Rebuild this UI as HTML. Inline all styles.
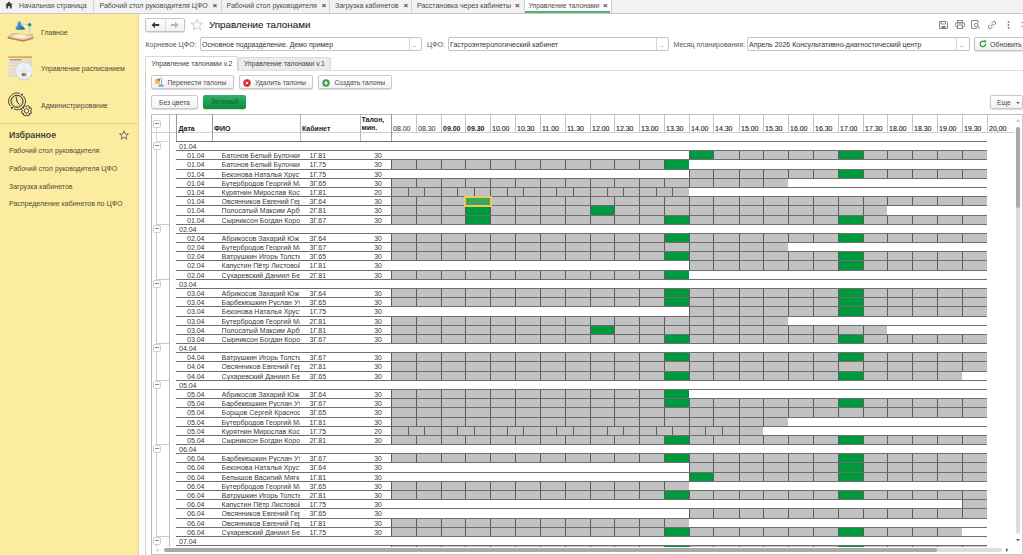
<!DOCTYPE html><html><head><meta charset="utf-8"><title>Управление талонами</title><style>
html,body{margin:0;padding:0}
body{width:1023px;height:555px;overflow:hidden;position:relative;background:#fff;font-family:"Liberation Sans", sans-serif;color:#333}
div{position:absolute;box-sizing:border-box}
.t{white-space:nowrap;font-size:7px;line-height:9px}
svg{position:absolute}

</style></head><body>
<div style="left:0px;top:0px;width:1023px;height:13px;background:#f2f2f2"></div>
<div style="left:0px;top:13px;width:1023px;height:1px;background:#c9c9c9"></div>
<svg style="left:5px;top:1px" width="8" height="8" viewBox="0 0 8 8"><path d="M4 0.6 L0.3 4.1 H1.3 V7.4 H3.1 V5.2 H4.9 V7.4 H6.7 V4.1 H7.7 Z" fill="#3c3c3c"/></svg>
<div class="t" style="left:19px;top:1px;color:#4a4a4a;font-size:7px;line-height:10px">Начальная страница</div>
<div style="left:93px;top:0px;width:1px;height:13px;background:#d2d2d2"></div>
<div class="t" style="left:99.5px;top:1px;color:#4a4a4a;font-size:7px;line-height:10px">Рабочий стол руководителя ЦФО</div>
<div class="t" style="left:212.5px;top:1px;color:#444;font-size:8px;line-height:10px;font-weight:bold">×</div>
<div style="left:221px;top:0px;width:1px;height:13px;background:#d2d2d2"></div>
<div class="t" style="left:226.5px;top:1px;color:#4a4a4a;font-size:7px;line-height:10px">Рабочий стол руководителя</div>
<div class="t" style="left:321.5px;top:1px;color:#444;font-size:8px;line-height:10px;font-weight:bold">×</div>
<div style="left:329px;top:0px;width:1px;height:13px;background:#d2d2d2"></div>
<div class="t" style="left:335px;top:1px;color:#4a4a4a;font-size:7px;line-height:10px">Загрузка кабинетов</div>
<div class="t" style="left:403.5px;top:1px;color:#444;font-size:8px;line-height:10px;font-weight:bold">×</div>
<div style="left:411px;top:0px;width:1px;height:13px;background:#d2d2d2"></div>
<div class="t" style="left:417px;top:1px;color:#4a4a4a;font-size:7px;line-height:10px">Расстановка через кабинеты</div>
<div class="t" style="left:515px;top:1px;color:#444;font-size:8px;line-height:10px;font-weight:bold">×</div>
<div style="left:524px;top:0px;width:1px;height:13px;background:#d2d2d2"></div>
<div style="left:525px;top:0px;width:86px;height:13px;background:#fff"></div>
<div style="left:525px;top:11px;width:85px;height:2px;background:#4cb478"></div>
<div class="t" style="left:528.5px;top:1px;color:#4a4a4a;font-size:6.85px;line-height:10px">Управление талонами</div>
<div class="t" style="left:603px;top:1px;color:#444;font-size:8px;line-height:10px;font-weight:bold">×</div>
<div style="left:611px;top:0px;width:1px;height:13px;background:#d2d2d2"></div>
<div style="left:0px;top:14px;width:138px;height:541px;background:#fbec9f"></div>
<div style="left:138px;top:14px;width:1px;height:541px;background:#e8d98c"></div>
<div class="t" style="left:41px;top:27.5px;color:#4d4d3a;font-size:7px;line-height:10px">Главное</div>
<div class="t" style="left:41px;top:63.8px;color:#4d4d3a;font-size:7px;line-height:10px">Управление расписанием</div>
<div class="t" style="left:41px;top:100.5px;color:#4d4d3a;font-size:7px;line-height:10px">Администрирование</div>
<div style="left:0px;top:123px;width:138px;height:1px;background:#e3d38a"></div>
<div class="t" style="left:9px;top:129.5px;color:#4a4a3a;font-size:8.8px;line-height:11px;font-weight:bold">Избранное</div>
<svg style="left:119px;top:130px" width="10" height="10" viewBox="0 0 10 10"><path d="M5 0.8 L6.2 3.8 L9.4 3.9 L6.9 5.9 L7.8 9.1 L5 7.3 L2.2 9.1 L3.1 5.9 L0.6 3.9 L3.8 3.8 Z" fill="none" stroke="#555" stroke-width="0.8"/></svg>
<div class="t" style="left:9px;top:146px;color:#4d4d3a;font-size:7px;line-height:10px">Рабочий стол руководителя</div>
<div class="t" style="left:9px;top:163.5px;color:#4d4d3a;font-size:7px;line-height:10px">Рабочий стол руководителя ЦФО</div>
<div class="t" style="left:9px;top:181.5px;color:#4d4d3a;font-size:7px;line-height:10px">Загрузка кабинетов</div>
<div class="t" style="left:9px;top:199px;color:#4d4d3a;font-size:7px;line-height:10px">Распределение кабинетов по ЦФО</div>
<svg style="left:7px;top:20px" width="28" height="24" viewBox="0 0 28 24">
<defs><radialGradient id="dk" cx="0.5" cy="0.45" r="0.55"><stop offset="0" stop-color="#ffffff"/><stop offset="0.45" stop-color="#f3e2c4"/><stop offset="1" stop-color="#d9b07e"/></radialGradient>
<linearGradient id="sh" x1="0" y1="0" x2="1" y2="1"><stop offset="0" stop-color="#7cc0ea"/><stop offset="0.6" stop-color="#2f7fc0"/><stop offset="1" stop-color="#1e5d98"/></linearGradient></defs>
<path d="M8.6 9.3 L17.8 9.3 L20 14.5 L6 14.5 Z" fill="#f7ef7c" opacity="0.6"/>
<path d="M0.5 16.8 L5.5 13.4 L25.5 14.4 L26.6 17.4 L26 19 L16 21.8 L0.8 18.6 Z" fill="#b9844f"/>
<path d="M0.5 16.8 L5.5 13.4 L25.5 14.4 L26.6 17.4 L16 20.3 Z" fill="url(#dk)"/>
<path d="M13.6 4.2 L22.5 4.5" stroke="#cfd4da" stroke-width="1.2"/>
<rect x="22" y="5.2" width="1.3" height="9.6" fill="#c9ced4"/>
<circle cx="22.6" cy="4.7" r="1.8" fill="#2f7fc0"/>
<path d="M10.6 1.8 Q12.2 0.6 13.8 1.8 L14.4 5.2 Q17.6 7.2 18.2 9.2 Q13.2 10.5 8.3 9.2 Q9 7 10.4 5.2 Z" fill="url(#sh)"/>
</svg>
<svg style="left:8px;top:56px" width="26" height="26" viewBox="0 0 26 26">
<defs><linearGradient id="cal" x1="0" y1="0" x2="1" y2="1"><stop offset="0" stop-color="#f1e9d6"/><stop offset="1" stop-color="#ddd0b0"/></linearGradient></defs>
<rect x="0" y="0.5" width="24" height="20.5" fill="url(#cal)"/>
<rect x="0" y="0.4" width="24" height="1.3" fill="#d9953e"/>
<rect x="1.5" y="3" width="12" height="1.6" fill="#9a8f7a" opacity="0.8"/>
<rect x="1.5" y="6.5" width="8" height="0.5" fill="#cdbf9f"/>
<rect x="1.5" y="9" width="8" height="0.5" fill="#cdbf9f"/>
<ellipse cx="16" cy="23" rx="5" ry="1.5" fill="#c9c3b0" opacity="0.6"/>
<circle cx="16" cy="14.8" r="8.7" fill="#d3dde6"/>
<circle cx="16" cy="14.8" r="7.9" fill="#eef4f9"/>
<path d="M16 7.5 V22 M8.6 14.8 H23.4" stroke="#c3d0dc" stroke-width="0.5"/>
<rect x="13.7" y="17" width="2.2" height="3.2" fill="#2e8ad6"/>
<rect x="15.9" y="17" width="2.4" height="3.2" fill="#ea7a2c"/>
</svg>
<svg style="left:7px;top:92px" width="28" height="26" viewBox="0 0 28 26">
<path d="M16.36 3.96 A8.3 8.3 0 0 1 6.89 17.00 M3.46 14.41 A8.3 8.3 0 0 1 13.11 1.60" fill="none" stroke="#333" stroke-width="0.9"/>
<path d="M15.97 3.53 L15.25 0.90 L13.55 3.62 Z M4.03 15.07 L4.75 17.70 L6.45 14.98 Z" fill="#222"/>
<circle cx="10" cy="9.3" r="6.1" fill="none" stroke="#333" stroke-width="1"/>
<path d="M14.30 9.30 L15.30 9.30 M13.72 11.45 L14.59 11.95 M12.15 13.02 L12.65 13.89 M10.00 13.60 L10.00 14.60 M7.85 13.02 L7.35 13.89 M6.28 11.45 L5.41 11.95 M5.70 9.30 L4.70 9.30 M6.28 7.15 L5.41 6.65 M7.85 5.58 L7.35 4.71 M10.00 5.00 L10.00 4.00 M12.15 5.58 L12.65 4.71 M13.72 7.15 L14.59 6.65 " stroke="#444" stroke-width="0.6"/>
<path d="M9 4.8 L10.2 10 L12.4 12.6" fill="none" stroke="#333" stroke-width="1"/>
<path d="M23.30 18.70 L24.70 19.81 L23.90 21.76 L22.11 21.56 L22.26 21.41 L22.46 23.20 L20.51 24.00 L19.40 22.60 L19.60 22.60 L18.49 24.00 L16.54 23.20 L16.74 21.41 L16.89 21.56 L15.10 21.76 L14.30 19.81 L15.70 18.70 L15.70 18.90 L14.30 17.79 L15.10 15.84 L16.89 16.04 L16.74 16.19 L16.54 14.40 L18.49 13.60 L19.60 15.00 L19.40 15.00 L20.51 13.60 L22.46 14.40 L22.26 16.19 L22.11 16.04 L23.90 15.84 L24.70 17.79 L23.30 18.90 Z" fill="#fbec9f" stroke="#333" stroke-width="0.9"/>
<circle cx="19.5" cy="18.8" r="2.2" fill="none" stroke="#333" stroke-width="0.8"/>
</svg>
<div style="left:145px;top:18px;width:40px;height:14px;border:1px solid #c4c4c4;border-radius:2px;background:linear-gradient(#fff,#f1f1f1);box-shadow:0 1px 1px rgba(0,0,0,0.12)"></div>
<div style="left:165px;top:19px;width:1px;height:12px;background:#dcdcdc"></div>
<svg style="left:151px;top:21px" width="9" height="8" viewBox="0 0 9 8"><path d="M0.5 4 L4 0.8 V2.9 H8.2 V5.1 H4 V7.2 Z" fill="#3a3a3a"/></svg>
<svg style="left:170px;top:21px" width="9" height="8" viewBox="0 0 9 8"><path d="M8.5 4 L5 0.8 V2.9 H0.8 V5.1 H5 V7.2 Z" fill="#b5b5b5"/></svg>
<svg style="left:190px;top:18px" width="14" height="13" viewBox="0 0 14 13"><path d="M7 1 L8.6 5 L12.9 5.1 L9.5 7.8 L10.7 12 L7 9.6 L3.3 12 L4.5 7.8 L1.1 5.1 L5.4 5 Z" fill="none" stroke="#c8c8c8" stroke-width="0.9"/></svg>
<div class="t" style="left:209px;top:18px;color:#1e1e1e;font-size:9.8px;line-height:13px;-webkit-text-stroke:0.1px #1e1e1e">Управление талонами</div>
<svg style="left:939px;top:21px" width="9" height="8" viewBox="0 0 9 8"><path d="M0.5 0.5 H7.5 L8.5 1.5 V7.5 H0.5 Z" fill="none" stroke="#7c7c7c" stroke-width="0.9"/><rect x="2" y="0.5" width="4.5" height="2.5" fill="none" stroke="#7c7c7c" stroke-width="0.8"/><rect x="2.5" y="5" width="4" height="2.5" fill="#7c7c7c"/></svg>
<svg style="left:955px;top:20px" width="10" height="9" viewBox="0 0 10 9"><rect x="2.5" y="0.5" width="5" height="2.5" fill="none" stroke="#7c7c7c" stroke-width="0.9"/><rect x="0.5" y="2.8" width="9" height="4" rx="1" fill="none" stroke="#7c7c7c" stroke-width="0.9"/><rect x="2.5" y="5" width="5" height="3.5" fill="#fff" stroke="#7c7c7c" stroke-width="0.9"/></svg>
<svg style="left:971px;top:20px" width="10" height="9" viewBox="0 0 10 9"><path d="M7 0.5 H0.5 V8.5 H6" fill="none" stroke="#7c7c7c" stroke-width="0.9"/><path d="M7 0.5 V3" fill="none" stroke="#7c7c7c" stroke-width="0.9"/><circle cx="5.2" cy="5" r="1.8" fill="none" stroke="#7c7c7c" stroke-width="0.9"/><path d="M6.5 6.3 L8.5 8.3" stroke="#7c7c7c" stroke-width="1.1"/></svg>
<svg style="left:987px;top:20px" width="10" height="10" viewBox="0 0 10 10"><g transform="rotate(-45 5 5)"><path d="M4.2 3.3 H2.2 A1.7 1.7 0 0 0 2.2 6.7 H4.2" fill="none" stroke="#7c7c7c" stroke-width="0.9"/><path d="M5.8 3.3 H7.8 A1.7 1.7 0 0 1 7.8 6.7 H5.8" fill="none" stroke="#7c7c7c" stroke-width="0.9"/><path d="M3.4 5 H6.6" stroke="#7c7c7c" stroke-width="0.9"/></g></svg>
<svg style="left:1007px;top:21px" width="3" height="8" viewBox="0 0 3 8"><circle cx="1.5" cy="1" r="0.9" fill="#7c7c7c"/><circle cx="1.5" cy="4" r="0.9" fill="#7c7c7c"/><circle cx="1.5" cy="7" r="0.9" fill="#7c7c7c"/></svg>
<div style="left:1021px;top:22px;width:2px;height:1px;background:#aaa"></div>
<div style="left:1021px;top:26px;width:2px;height:1px;background:#aaa"></div>
<div class="t" style="left:145.5px;top:39.6px;color:#555;font-size:7px;line-height:10px">Корневое ЦФО:</div>
<div style="left:200px;top:37px;width:222px;height:14px;border:1px solid #c4c4c4;border-radius:2px;background:#fff"></div>
<div style="left:409px;top:38px;width:1px;height:12px;background:#d6d6d6"></div>
<div class="t" style="left:202px;top:39.7px;color:#333;font-size:7px;line-height:10px;overflow:hidden;width:206px">Основное подразделение. Демо пример</div>
<div class="t" style="left:412.5px;top:39.5px;color:#666;font-size:7px;line-height:10px">..</div>
<div class="t" style="left:427px;top:39.6px;color:#555;font-size:7px;line-height:10px">ЦФО:</div>
<div style="left:448px;top:37px;width:221px;height:14px;border:1px solid #c4c4c4;border-radius:2px;background:#fff"></div>
<div style="left:656px;top:38px;width:1px;height:12px;background:#d6d6d6"></div>
<div class="t" style="left:450px;top:39.7px;color:#333;font-size:7px;line-height:10px;overflow:hidden;width:205px">Гастроэнтерологический кабинет</div>
<div class="t" style="left:659.5px;top:39.5px;color:#666;font-size:7px;line-height:10px">..</div>
<div class="t" style="left:673.5px;top:39.6px;color:#555;font-size:7px;line-height:10px">Месяц планирования:</div>
<div style="left:747px;top:37px;width:223px;height:14px;border:1px solid #c4c4c4;border-radius:2px;background:#fff"></div>
<div style="left:956px;top:38px;width:1px;height:12px;background:#d6d6d6"></div>
<div class="t" style="left:749px;top:39.7px;color:#333;font-size:7px;line-height:10px;overflow:hidden;width:206px">Апрель 2026 Консультативно-диагностический центр</div>
<div class="t" style="left:959.5px;top:39.5px;color:#666;font-size:7px;line-height:10px">..</div>
<div style="left:974px;top:37px;width:60px;height:14px;border:1px solid #c4c4c4;border-radius:2px;background:linear-gradient(#fff,#f0f0f0);box-shadow:0 1px 1px rgba(0,0,0,0.12)"></div>
<svg style="left:978.5px;top:40px" width="8" height="8" viewBox="0 0 8 8"><path d="M6.6 4 A2.7 2.7 0 1 1 5.3 1.7" fill="none" stroke="#2d9c3c" stroke-width="1.3"/><path d="M4.2 0.2 L7.2 0.6 L6.6 3.4 Z" fill="#2d9c3c"/></svg>
<div class="t" style="left:990px;top:39.6px;color:#444;font-size:7px;line-height:10px">Обновить</div>
<div style="left:145px;top:70px;width:878px;height:1px;background:#dedede"></div>
<div style="left:145px;top:56px;width:93px;height:15px;border:1px solid #d6d6d6;border-bottom:none;border-radius:2px 2px 0 0;background:#fff"></div>
<div style="left:238px;top:57px;width:93px;height:13px;border:1px solid #d9d9d9;border-bottom:none;border-radius:2px 2px 0 0;background:#ececec"></div>
<div class="t" style="left:151.5px;top:59px;color:#444;font-size:6.8px;line-height:10px">Управление талонами v.2</div>
<div class="t" style="left:244px;top:59px;color:#444;font-size:6.8px;line-height:10px">Управление талонами v.1</div>
<div style="left:145px;top:71px;width:1px;height:484px;background:#d2d2d2"></div>
<div style="left:151px;top:75px;width:83px;height:14px;border:1px solid #c8c8c8;border-radius:2px;background:linear-gradient(#fff,#f2f2f2);box-shadow:0 1px 1px rgba(0,0,0,0.15)"></div>
<div class="t" style="left:167.5px;top:77.8px;color:#4d4d4d;font-size:6.75px;line-height:10px">Перенести талоны</div>
<svg style="left:154px;top:77px" width="12" height="11" viewBox="0 0 12 11"><rect x="1" y="1.6" width="5" height="5.1" fill="#eeb545"/><rect x="1.6" y="4.5" width="3.6" height="1.2" fill="#f7d27a"/><circle cx="1.9" cy="2.6" r="0.8" fill="#f8e08a"/><path d="M4.6 2.8 L6.6 1 L7.6 1.6 V7.8" fill="none" stroke="#7aa6cf" stroke-width="1"/><ellipse cx="7" cy="8.7" rx="3" ry="1.1" fill="#6aa2d6"/><circle cx="4.6" cy="2.8" r="0.9" fill="#1f5a94"/></svg>
<div style="left:239px;top:75px;width:74px;height:14px;border:1px solid #c8c8c8;border-radius:2px;background:linear-gradient(#fff,#f2f2f2);box-shadow:0 1px 1px rgba(0,0,0,0.15)"></div>
<div class="t" style="left:255px;top:77.8px;color:#4d4d4d;font-size:6.75px;line-height:10px">Удалить талоны</div>
<svg style="left:243px;top:79px" width="8" height="8" viewBox="0 0 8 8"><circle cx="4" cy="4" r="3.7" fill="#d9262a"/><path d="M2.6 2.6 L5.4 5.4 M5.4 2.6 L2.6 5.4" stroke="#fff" stroke-width="1"/></svg>
<div style="left:318px;top:75px;width:74px;height:14px;border:1px solid #c8c8c8;border-radius:2px;background:linear-gradient(#fff,#f2f2f2);box-shadow:0 1px 1px rgba(0,0,0,0.15)"></div>
<div class="t" style="left:334.5px;top:77.8px;color:#4d4d4d;font-size:6.75px;line-height:10px">Создать талоны</div>
<svg style="left:322px;top:79px" width="8" height="8" viewBox="0 0 8 8"><circle cx="4" cy="4" r="3.7" fill="#3aa04a"/><path d="M4 2 V6 M2 4 H6" stroke="#fff" stroke-width="1.2"/></svg>
<div style="left:151px;top:95px;width:47px;height:14px;border:1px solid #c8c8c8;border-radius:2px;background:linear-gradient(#fff,#f2f2f2);box-shadow:0 1px 1px rgba(0,0,0,0.15)"></div>
<div class="t" style="left:159px;top:97.8px;color:#4d4d4d;font-size:6.75px;line-height:10px">Без цвета</div>
<div style="left:203px;top:95px;width:43px;height:14px;border-radius:2px;background:linear-gradient(#34ad6a,#07903c);box-shadow:0 1px 1px rgba(0,0,0,0.15)"></div>
<div class="t" style="left:211px;top:97.4px;color:#0f5f2c;font-size:6.7px;line-height:10px">Зеленый</div>
<div style="left:989.5px;top:95px;width:33.5px;height:13.5px;border:1px solid #c8c8c8;border-radius:2px;background:linear-gradient(#fff,#f2f2f2);box-shadow:0 1px 1px rgba(0,0,0,0.15)"></div>
<div class="t" style="left:997px;top:97.55px;color:#4d4d4d;font-size:6.75px;line-height:10px">Еще</div>
<svg style="left:1015.5px;top:101.5px" width="4" height="3" viewBox="0 0 4 3"><path d="M0.3 0 H3.7 L2 2 Z" fill="#555"/></svg>
<div style="left:151px;top:114px;width:872px;height:441px;border:1px solid #bdbdbd"></div>
<div style="left:169px;top:114px;width:1px;height:440px;background:#c2c2c2"></div>
<div style="left:151px;top:132px;width:863px;height:1px;background:#d0d0d0"></div>
<div style="left:176px;top:114px;width:1px;height:27px;background:#9a9a9a"></div>
<div style="left:212px;top:114px;width:1px;height:27px;background:#9a9a9a"></div>
<div style="left:300px;top:114px;width:1px;height:27px;background:#b8b8b8"></div>
<div style="left:360px;top:114px;width:1px;height:27px;background:#b8b8b8"></div>
<div style="left:391px;top:114px;width:1px;height:27px;background:#9a9a9a"></div>
<div style="left:416px;top:114px;width:1px;height:18px;background:#c4c4c4"></div>
<div style="left:441px;top:114px;width:1px;height:18px;background:#c4c4c4"></div>
<div style="left:465px;top:114px;width:1px;height:18px;background:#c4c4c4"></div>
<div style="left:490px;top:114px;width:1px;height:18px;background:#c4c4c4"></div>
<div style="left:515px;top:114px;width:1px;height:18px;background:#c4c4c4"></div>
<div style="left:540px;top:114px;width:1px;height:18px;background:#c4c4c4"></div>
<div style="left:565px;top:114px;width:1px;height:18px;background:#c4c4c4"></div>
<div style="left:590px;top:114px;width:1px;height:18px;background:#c4c4c4"></div>
<div style="left:614px;top:114px;width:1px;height:18px;background:#c4c4c4"></div>
<div style="left:639px;top:114px;width:1px;height:18px;background:#c4c4c4"></div>
<div style="left:664px;top:114px;width:1px;height:18px;background:#c4c4c4"></div>
<div style="left:689px;top:114px;width:1px;height:18px;background:#c4c4c4"></div>
<div style="left:713px;top:114px;width:1px;height:18px;background:#c4c4c4"></div>
<div style="left:739px;top:114px;width:1px;height:18px;background:#c4c4c4"></div>
<div style="left:763px;top:114px;width:1px;height:18px;background:#c4c4c4"></div>
<div style="left:788px;top:114px;width:1px;height:18px;background:#c4c4c4"></div>
<div style="left:813px;top:114px;width:1px;height:18px;background:#c4c4c4"></div>
<div style="left:838px;top:114px;width:1px;height:18px;background:#c4c4c4"></div>
<div style="left:863px;top:114px;width:1px;height:18px;background:#c4c4c4"></div>
<div style="left:887px;top:114px;width:1px;height:18px;background:#c4c4c4"></div>
<div style="left:912px;top:114px;width:1px;height:18px;background:#c4c4c4"></div>
<div style="left:937px;top:114px;width:1px;height:18px;background:#c4c4c4"></div>
<div style="left:962px;top:114px;width:1px;height:18px;background:#c4c4c4"></div>
<div style="left:987px;top:114px;width:1px;height:18px;background:#c4c4c4"></div>
<div style="left:176px;top:141px;width:811px;height:1px;background:#707070"></div>
<div class="t" style="left:178.5px;top:124px;color:#222;font-size:7px;line-height:9px;font-weight:bold">Дата</div>
<div class="t" style="left:214px;top:124px;color:#222;font-size:7px;line-height:9px;font-weight:bold">ФИО</div>
<div class="t" style="left:302px;top:124px;color:#222;font-size:7px;line-height:9px;font-weight:bold">Кабинет</div>
<div class="t" style="left:361.5px;top:115px;color:#222;font-size:7px;line-height:9px;font-weight:bold">Талон,</div>
<div class="t" style="left:361.5px;top:123px;color:#222;font-size:7px;line-height:9px;font-weight:bold">мин.</div>
<div class="t" style="left:393px;top:123.6px;color:#3f4b58;font-size:7px;line-height:9px;-webkit-text-stroke:0.1px #3f4b58">08.00</div>
<div class="t" style="left:418px;top:123.6px;color:#3f4b58;font-size:7px;line-height:9px;-webkit-text-stroke:0.1px #3f4b58">08.30</div>
<div class="t" style="left:443px;top:123.6px;color:#222;font-size:7px;line-height:9px;font-weight:bold">09.00</div>
<div class="t" style="left:467px;top:123.6px;color:#222;font-size:7px;line-height:9px;font-weight:bold">09.30</div>
<div class="t" style="left:492px;top:123.6px;color:#1a1a1a;font-size:7px;line-height:9px;-webkit-text-stroke:0.1px #1a1a1a">10.00</div>
<div class="t" style="left:517px;top:123.6px;color:#1a1a1a;font-size:7px;line-height:9px;-webkit-text-stroke:0.1px #1a1a1a">10.30</div>
<div class="t" style="left:542px;top:123.6px;color:#1a1a1a;font-size:7px;line-height:9px;-webkit-text-stroke:0.1px #1a1a1a">11.00</div>
<div class="t" style="left:567px;top:123.6px;color:#1a1a1a;font-size:7px;line-height:9px;-webkit-text-stroke:0.1px #1a1a1a">11.30</div>
<div class="t" style="left:592px;top:123.6px;color:#1a1a1a;font-size:7px;line-height:9px;-webkit-text-stroke:0.1px #1a1a1a">12.00</div>
<div class="t" style="left:616px;top:123.6px;color:#1a1a1a;font-size:7px;line-height:9px;-webkit-text-stroke:0.1px #1a1a1a">12.30</div>
<div class="t" style="left:641px;top:123.6px;color:#1a1a1a;font-size:7px;line-height:9px;-webkit-text-stroke:0.1px #1a1a1a">13.00</div>
<div class="t" style="left:666px;top:123.6px;color:#1a1a1a;font-size:7px;line-height:9px;-webkit-text-stroke:0.1px #1a1a1a">13.30</div>
<div class="t" style="left:691px;top:123.6px;color:#1a1a1a;font-size:7px;line-height:9px;-webkit-text-stroke:0.1px #1a1a1a">14.00</div>
<div class="t" style="left:715px;top:123.6px;color:#1a1a1a;font-size:7px;line-height:9px;-webkit-text-stroke:0.1px #1a1a1a">14.30</div>
<div class="t" style="left:741px;top:123.6px;color:#1a1a1a;font-size:7px;line-height:9px;-webkit-text-stroke:0.1px #1a1a1a">15.00</div>
<div class="t" style="left:765px;top:123.6px;color:#1a1a1a;font-size:7px;line-height:9px;-webkit-text-stroke:0.1px #1a1a1a">15.30</div>
<div class="t" style="left:790px;top:123.6px;color:#1a1a1a;font-size:7px;line-height:9px;-webkit-text-stroke:0.1px #1a1a1a">16.00</div>
<div class="t" style="left:815px;top:123.6px;color:#1a1a1a;font-size:7px;line-height:9px;-webkit-text-stroke:0.1px #1a1a1a">16.30</div>
<div class="t" style="left:840px;top:123.6px;color:#1a1a1a;font-size:7px;line-height:9px;-webkit-text-stroke:0.1px #1a1a1a">17.00</div>
<div class="t" style="left:865px;top:123.6px;color:#1a1a1a;font-size:7px;line-height:9px;-webkit-text-stroke:0.1px #1a1a1a">17.30</div>
<div class="t" style="left:889px;top:123.6px;color:#1a1a1a;font-size:7px;line-height:9px;-webkit-text-stroke:0.1px #1a1a1a">18.00</div>
<div class="t" style="left:914px;top:123.6px;color:#1a1a1a;font-size:7px;line-height:9px;-webkit-text-stroke:0.1px #1a1a1a">18.30</div>
<div class="t" style="left:939px;top:123.6px;color:#1a1a1a;font-size:7px;line-height:9px;-webkit-text-stroke:0.1px #1a1a1a">19.00</div>
<div class="t" style="left:964px;top:123.6px;color:#1a1a1a;font-size:7px;line-height:9px;-webkit-text-stroke:0.1px #1a1a1a">19.30</div>
<div class="t" style="left:989px;top:123.6px;color:#1a1a1a;font-size:7px;line-height:9px;-webkit-text-stroke:0.1px #1a1a1a">20,00</div>
<div style="left:153px;top:120px;width:8px;height:8px;border:1px solid #cfcfcf;border-radius:2px;background:#fff"></div>
<div style="left:155px;top:123px;width:4px;height:1px;background:#8a8a8a"></div>
<div style="left:156px;top:128px;width:1px;height:13px;background:#dadada"></div>
<div style="left:156px;top:141px;width:13px;height:1px;background:#dadada"></div>
<div class="t" style="left:179px;top:141.5px;color:#3a3a3a;font-size:7px;line-height:9px">01.04</div>
<div style="left:153px;top:142px;width:8px;height:8px;border:1px solid #cfcfcf;border-radius:2px;background:#fff"></div>
<div style="left:155px;top:145px;width:4px;height:1px;background:#8a8a8a"></div>
<div class="t" style="left:187px;top:150.5px;color:#3a3a3a;font-size:7px;line-height:9px">01.04</div>
<div class="t" style="left:221.6px;top:150.5px;width:78.8px;overflow:hidden;color:#3a3a3a;line-height:9px">Батонов Белый Булочки</div>
<div class="t" style="left:309.5px;top:150.5px;color:#3a3a3a;font-size:7px;line-height:9px">1Г.81</div>
<div class="t" style="left:340px;top:150.5px;width:42px;text-align:right;color:#3a3a3a;line-height:9px">30</div>
<div class="t" style="left:187px;top:159.5px;color:#3a3a3a;font-size:7px;line-height:9px">01.04</div>
<div class="t" style="left:221.6px;top:159.5px;width:78.8px;overflow:hidden;color:#3a3a3a;line-height:9px">Батонов Белый Булочки</div>
<div class="t" style="left:309.5px;top:159.5px;color:#3a3a3a;font-size:7px;line-height:9px">1Г.75</div>
<div class="t" style="left:340px;top:159.5px;width:42px;text-align:right;color:#3a3a3a;line-height:9px">30</div>
<div class="t" style="left:187px;top:169.5px;color:#3a3a3a;font-size:7px;line-height:9px">01.04</div>
<div class="t" style="left:221.6px;top:169.5px;width:78.8px;overflow:hidden;color:#3a3a3a;line-height:9px">Беконова Наталья Хруст</div>
<div class="t" style="left:309.5px;top:169.5px;color:#3a3a3a;font-size:7px;line-height:9px">1Г.75</div>
<div class="t" style="left:340px;top:169.5px;width:42px;text-align:right;color:#3a3a3a;line-height:9px">30</div>
<div class="t" style="left:187px;top:178.5px;color:#3a3a3a;font-size:7px;line-height:9px">01.04</div>
<div class="t" style="left:221.6px;top:178.5px;width:78.8px;overflow:hidden;color:#3a3a3a;line-height:9px">Бутербродов Георгий Ма</div>
<div class="t" style="left:309.5px;top:178.5px;color:#3a3a3a;font-size:7px;line-height:9px">3Г.65</div>
<div class="t" style="left:340px;top:178.5px;width:42px;text-align:right;color:#3a3a3a;line-height:9px">30</div>
<div class="t" style="left:187px;top:187.5px;color:#3a3a3a;font-size:7px;line-height:9px">01.04</div>
<div class="t" style="left:221.6px;top:187.5px;width:78.8px;overflow:hidden;color:#3a3a3a;line-height:9px">Курятнин Мирослав Кост</div>
<div class="t" style="left:309.5px;top:187.5px;color:#3a3a3a;font-size:7px;line-height:9px">1Г.81</div>
<div class="t" style="left:340px;top:187.5px;width:42px;text-align:right;color:#3a3a3a;line-height:9px">20</div>
<div class="t" style="left:187px;top:196.5px;color:#3a3a3a;font-size:7px;line-height:9px">01.04</div>
<div class="t" style="left:221.6px;top:196.5px;width:78.8px;overflow:hidden;color:#3a3a3a;line-height:9px">Овсянников Евгений Гер</div>
<div class="t" style="left:309.5px;top:196.5px;color:#3a3a3a;font-size:7px;line-height:9px">3Г.64</div>
<div class="t" style="left:340px;top:196.5px;width:42px;text-align:right;color:#3a3a3a;line-height:9px">30</div>
<div class="t" style="left:187px;top:205.5px;color:#3a3a3a;font-size:7px;line-height:9px">01.04</div>
<div class="t" style="left:221.6px;top:205.5px;width:78.8px;overflow:hidden;color:#3a3a3a;line-height:9px">Полосатый Максим Арбу</div>
<div class="t" style="left:309.5px;top:205.5px;color:#3a3a3a;font-size:7px;line-height:9px">2Г.81</div>
<div class="t" style="left:340px;top:205.5px;width:42px;text-align:right;color:#3a3a3a;line-height:9px">30</div>
<div class="t" style="left:187px;top:215.5px;color:#3a3a3a;font-size:7px;line-height:9px">01.04</div>
<div class="t" style="left:221.6px;top:215.5px;width:78.8px;overflow:hidden;color:#3a3a3a;line-height:9px">Сырниксон Богдан Коро</div>
<div class="t" style="left:309.5px;top:215.5px;color:#3a3a3a;font-size:7px;line-height:9px">3Г.67</div>
<div class="t" style="left:340px;top:215.5px;width:42px;text-align:right;color:#3a3a3a;line-height:9px">30</div>
<div class="t" style="left:179px;top:224.5px;color:#3a3a3a;font-size:7px;line-height:9px">02.04</div>
<div style="left:153px;top:225px;width:8px;height:8px;border:1px solid #cfcfcf;border-radius:2px;background:#fff"></div>
<div style="left:155px;top:228px;width:4px;height:1px;background:#8a8a8a"></div>
<div class="t" style="left:187px;top:233.5px;color:#3a3a3a;font-size:7px;line-height:9px">02.04</div>
<div class="t" style="left:221.6px;top:233.5px;width:78.8px;overflow:hidden;color:#3a3a3a;line-height:9px">Абрикосов Захарий Юж</div>
<div class="t" style="left:309.5px;top:233.5px;color:#3a3a3a;font-size:7px;line-height:9px">3Г.64</div>
<div class="t" style="left:340px;top:233.5px;width:42px;text-align:right;color:#3a3a3a;line-height:9px">30</div>
<div class="t" style="left:187px;top:242.5px;color:#3a3a3a;font-size:7px;line-height:9px">02.04</div>
<div class="t" style="left:221.6px;top:242.5px;width:78.8px;overflow:hidden;color:#3a3a3a;line-height:9px">Бутербродов Георгий Ма</div>
<div class="t" style="left:309.5px;top:242.5px;color:#3a3a3a;font-size:7px;line-height:9px">3Г.67</div>
<div class="t" style="left:340px;top:242.5px;width:42px;text-align:right;color:#3a3a3a;line-height:9px">30</div>
<div class="t" style="left:187px;top:251.5px;color:#3a3a3a;font-size:7px;line-height:9px">02.04</div>
<div class="t" style="left:221.6px;top:251.5px;width:78.8px;overflow:hidden;color:#3a3a3a;line-height:9px">Ватрушкин Игорь Толсть</div>
<div class="t" style="left:309.5px;top:251.5px;color:#3a3a3a;font-size:7px;line-height:9px">3Г.65</div>
<div class="t" style="left:340px;top:251.5px;width:42px;text-align:right;color:#3a3a3a;line-height:9px">30</div>
<div class="t" style="left:187px;top:260.5px;color:#3a3a3a;font-size:7px;line-height:9px">02.04</div>
<div class="t" style="left:221.6px;top:260.5px;width:78.8px;overflow:hidden;color:#3a3a3a;line-height:9px">Капустин Пётр Листовой</div>
<div class="t" style="left:309.5px;top:260.5px;color:#3a3a3a;font-size:7px;line-height:9px">1Г.81</div>
<div class="t" style="left:340px;top:260.5px;width:42px;text-align:right;color:#3a3a3a;line-height:9px">30</div>
<div class="t" style="left:187px;top:270.5px;color:#3a3a3a;font-size:7px;line-height:9px">02.04</div>
<div class="t" style="left:221.6px;top:270.5px;width:78.8px;overflow:hidden;color:#3a3a3a;line-height:9px">Сухаревский Даниил Бе</div>
<div class="t" style="left:309.5px;top:270.5px;color:#3a3a3a;font-size:7px;line-height:9px">2Г.81</div>
<div class="t" style="left:340px;top:270.5px;width:42px;text-align:right;color:#3a3a3a;line-height:9px">30</div>
<div class="t" style="left:179px;top:279.5px;color:#3a3a3a;font-size:7px;line-height:9px">03.04</div>
<div style="left:153px;top:280px;width:8px;height:8px;border:1px solid #cfcfcf;border-radius:2px;background:#fff"></div>
<div style="left:155px;top:283px;width:4px;height:1px;background:#8a8a8a"></div>
<div class="t" style="left:187px;top:288.5px;color:#3a3a3a;font-size:7px;line-height:9px">03.04</div>
<div class="t" style="left:221.6px;top:288.5px;width:78.8px;overflow:hidden;color:#3a3a3a;line-height:9px">Абрикосов Захарий Юж</div>
<div class="t" style="left:309.5px;top:288.5px;color:#3a3a3a;font-size:7px;line-height:9px">3Г.64</div>
<div class="t" style="left:340px;top:288.5px;width:42px;text-align:right;color:#3a3a3a;line-height:9px">30</div>
<div class="t" style="left:187px;top:297.5px;color:#3a3a3a;font-size:7px;line-height:9px">03.04</div>
<div class="t" style="left:221.6px;top:297.5px;width:78.8px;overflow:hidden;color:#3a3a3a;line-height:9px">Барбекюшкин Руслан Ут</div>
<div class="t" style="left:309.5px;top:297.5px;color:#3a3a3a;font-size:7px;line-height:9px">3Г.65</div>
<div class="t" style="left:340px;top:297.5px;width:42px;text-align:right;color:#3a3a3a;line-height:9px">30</div>
<div class="t" style="left:187px;top:306.5px;color:#3a3a3a;font-size:7px;line-height:9px">03.04</div>
<div class="t" style="left:221.6px;top:306.5px;width:78.8px;overflow:hidden;color:#3a3a3a;line-height:9px">Беконова Наталья Хруст</div>
<div class="t" style="left:309.5px;top:306.5px;color:#3a3a3a;font-size:7px;line-height:9px">1Г.75</div>
<div class="t" style="left:340px;top:306.5px;width:42px;text-align:right;color:#3a3a3a;line-height:9px">30</div>
<div class="t" style="left:187px;top:316.5px;color:#3a3a3a;font-size:7px;line-height:9px">03.04</div>
<div class="t" style="left:221.6px;top:316.5px;width:78.8px;overflow:hidden;color:#3a3a3a;line-height:9px">Бутербродов Георгий Ма</div>
<div class="t" style="left:309.5px;top:316.5px;color:#3a3a3a;font-size:7px;line-height:9px">2Г.81</div>
<div class="t" style="left:340px;top:316.5px;width:42px;text-align:right;color:#3a3a3a;line-height:9px">30</div>
<div class="t" style="left:187px;top:325.5px;color:#3a3a3a;font-size:7px;line-height:9px">03.04</div>
<div class="t" style="left:221.6px;top:325.5px;width:78.8px;overflow:hidden;color:#3a3a3a;line-height:9px">Полосатый Максим Арбу</div>
<div class="t" style="left:309.5px;top:325.5px;color:#3a3a3a;font-size:7px;line-height:9px">1Г.81</div>
<div class="t" style="left:340px;top:325.5px;width:42px;text-align:right;color:#3a3a3a;line-height:9px">30</div>
<div class="t" style="left:187px;top:334.5px;color:#3a3a3a;font-size:7px;line-height:9px">03.04</div>
<div class="t" style="left:221.6px;top:334.5px;width:78.8px;overflow:hidden;color:#3a3a3a;line-height:9px">Сырниксон Богдан Коро</div>
<div class="t" style="left:309.5px;top:334.5px;color:#3a3a3a;font-size:7px;line-height:9px">3Г.67</div>
<div class="t" style="left:340px;top:334.5px;width:42px;text-align:right;color:#3a3a3a;line-height:9px">30</div>
<div class="t" style="left:179px;top:343.5px;color:#3a3a3a;font-size:7px;line-height:9px">04.04</div>
<div style="left:153px;top:344px;width:8px;height:8px;border:1px solid #cfcfcf;border-radius:2px;background:#fff"></div>
<div style="left:155px;top:347px;width:4px;height:1px;background:#8a8a8a"></div>
<div class="t" style="left:187px;top:352.5px;color:#3a3a3a;font-size:7px;line-height:9px">04.04</div>
<div class="t" style="left:221.6px;top:352.5px;width:78.8px;overflow:hidden;color:#3a3a3a;line-height:9px">Ватрушкин Игорь Толсть</div>
<div class="t" style="left:309.5px;top:352.5px;color:#3a3a3a;font-size:7px;line-height:9px">3Г.67</div>
<div class="t" style="left:340px;top:352.5px;width:42px;text-align:right;color:#3a3a3a;line-height:9px">30</div>
<div class="t" style="left:187px;top:361.5px;color:#3a3a3a;font-size:7px;line-height:9px">04.04</div>
<div class="t" style="left:221.6px;top:361.5px;width:78.8px;overflow:hidden;color:#3a3a3a;line-height:9px">Овсянников Евгений Гер</div>
<div class="t" style="left:309.5px;top:361.5px;color:#3a3a3a;font-size:7px;line-height:9px">2Г.81</div>
<div class="t" style="left:340px;top:361.5px;width:42px;text-align:right;color:#3a3a3a;line-height:9px">30</div>
<div class="t" style="left:187px;top:371.5px;color:#3a3a3a;font-size:7px;line-height:9px">04.04</div>
<div class="t" style="left:221.6px;top:371.5px;width:78.8px;overflow:hidden;color:#3a3a3a;line-height:9px">Сухаревский Даниил Бе</div>
<div class="t" style="left:309.5px;top:371.5px;color:#3a3a3a;font-size:7px;line-height:9px">3Г.65</div>
<div class="t" style="left:340px;top:371.5px;width:42px;text-align:right;color:#3a3a3a;line-height:9px">30</div>
<div class="t" style="left:179px;top:380.5px;color:#3a3a3a;font-size:7px;line-height:9px">05.04</div>
<div style="left:153px;top:381px;width:8px;height:8px;border:1px solid #cfcfcf;border-radius:2px;background:#fff"></div>
<div style="left:155px;top:384px;width:4px;height:1px;background:#8a8a8a"></div>
<div class="t" style="left:187px;top:389.5px;color:#3a3a3a;font-size:7px;line-height:9px">05.04</div>
<div class="t" style="left:221.6px;top:389.5px;width:78.8px;overflow:hidden;color:#3a3a3a;line-height:9px">Абрикосов Захарий Юж</div>
<div class="t" style="left:309.5px;top:389.5px;color:#3a3a3a;font-size:7px;line-height:9px">3Г.64</div>
<div class="t" style="left:340px;top:389.5px;width:42px;text-align:right;color:#3a3a3a;line-height:9px">30</div>
<div class="t" style="left:187px;top:398.5px;color:#3a3a3a;font-size:7px;line-height:9px">05.04</div>
<div class="t" style="left:221.6px;top:398.5px;width:78.8px;overflow:hidden;color:#3a3a3a;line-height:9px">Барбекюшкин Руслан Ут</div>
<div class="t" style="left:309.5px;top:398.5px;color:#3a3a3a;font-size:7px;line-height:9px">3Г.67</div>
<div class="t" style="left:340px;top:398.5px;width:42px;text-align:right;color:#3a3a3a;line-height:9px">30</div>
<div class="t" style="left:187px;top:407.5px;color:#3a3a3a;font-size:7px;line-height:9px">05.04</div>
<div class="t" style="left:221.6px;top:407.5px;width:78.8px;overflow:hidden;color:#3a3a3a;line-height:9px">Борщов Сергей Краснос</div>
<div class="t" style="left:309.5px;top:407.5px;color:#3a3a3a;font-size:7px;line-height:9px">3Г.65</div>
<div class="t" style="left:340px;top:407.5px;width:42px;text-align:right;color:#3a3a3a;line-height:9px">30</div>
<div class="t" style="left:187px;top:417.5px;color:#3a3a3a;font-size:7px;line-height:9px">05.04</div>
<div class="t" style="left:221.6px;top:417.5px;width:78.8px;overflow:hidden;color:#3a3a3a;line-height:9px">Бутербродов Георгий Ма</div>
<div class="t" style="left:309.5px;top:417.5px;color:#3a3a3a;font-size:7px;line-height:9px">1Г.81</div>
<div class="t" style="left:340px;top:417.5px;width:42px;text-align:right;color:#3a3a3a;line-height:9px">30</div>
<div class="t" style="left:187px;top:426.5px;color:#3a3a3a;font-size:7px;line-height:9px">05.04</div>
<div class="t" style="left:221.6px;top:426.5px;width:78.8px;overflow:hidden;color:#3a3a3a;line-height:9px">Курятнин Мирослав Кост</div>
<div class="t" style="left:309.5px;top:426.5px;color:#3a3a3a;font-size:7px;line-height:9px">1Г.75</div>
<div class="t" style="left:340px;top:426.5px;width:42px;text-align:right;color:#3a3a3a;line-height:9px">20</div>
<div class="t" style="left:187px;top:435.5px;color:#3a3a3a;font-size:7px;line-height:9px">05.04</div>
<div class="t" style="left:221.6px;top:435.5px;width:78.8px;overflow:hidden;color:#3a3a3a;line-height:9px">Сырниксон Богдан Коро</div>
<div class="t" style="left:309.5px;top:435.5px;color:#3a3a3a;font-size:7px;line-height:9px">2Г.81</div>
<div class="t" style="left:340px;top:435.5px;width:42px;text-align:right;color:#3a3a3a;line-height:9px">30</div>
<div class="t" style="left:179px;top:444.5px;color:#3a3a3a;font-size:7px;line-height:9px">06.04</div>
<div style="left:153px;top:445px;width:8px;height:8px;border:1px solid #cfcfcf;border-radius:2px;background:#fff"></div>
<div style="left:155px;top:448px;width:4px;height:1px;background:#8a8a8a"></div>
<div class="t" style="left:187px;top:453.5px;color:#3a3a3a;font-size:7px;line-height:9px">06.04</div>
<div class="t" style="left:221.6px;top:453.5px;width:78.8px;overflow:hidden;color:#3a3a3a;line-height:9px">Барбекюшкин Руслан Ут</div>
<div class="t" style="left:309.5px;top:453.5px;color:#3a3a3a;font-size:7px;line-height:9px">3Г.67</div>
<div class="t" style="left:340px;top:453.5px;width:42px;text-align:right;color:#3a3a3a;line-height:9px">30</div>
<div class="t" style="left:187px;top:462.5px;color:#3a3a3a;font-size:7px;line-height:9px">06.04</div>
<div class="t" style="left:221.6px;top:462.5px;width:78.8px;overflow:hidden;color:#3a3a3a;line-height:9px">Беконова Наталья Хруст</div>
<div class="t" style="left:309.5px;top:462.5px;color:#3a3a3a;font-size:7px;line-height:9px">3Г.64</div>
<div class="t" style="left:340px;top:462.5px;width:42px;text-align:right;color:#3a3a3a;line-height:9px">30</div>
<div class="t" style="left:187px;top:472.5px;color:#3a3a3a;font-size:7px;line-height:9px">06.04</div>
<div class="t" style="left:221.6px;top:472.5px;width:78.8px;overflow:hidden;color:#3a3a3a;line-height:9px">Белышов Василий Мягк</div>
<div class="t" style="left:309.5px;top:472.5px;color:#3a3a3a;font-size:7px;line-height:9px">1Г.81</div>
<div class="t" style="left:340px;top:472.5px;width:42px;text-align:right;color:#3a3a3a;line-height:9px">30</div>
<div class="t" style="left:187px;top:481.5px;color:#3a3a3a;font-size:7px;line-height:9px">06.04</div>
<div class="t" style="left:221.6px;top:481.5px;width:78.8px;overflow:hidden;color:#3a3a3a;line-height:9px">Бутербродов Георгий Ма</div>
<div class="t" style="left:309.5px;top:481.5px;color:#3a3a3a;font-size:7px;line-height:9px">3Г.65</div>
<div class="t" style="left:340px;top:481.5px;width:42px;text-align:right;color:#3a3a3a;line-height:9px">30</div>
<div class="t" style="left:187px;top:490.5px;color:#3a3a3a;font-size:7px;line-height:9px">06.04</div>
<div class="t" style="left:221.6px;top:490.5px;width:78.8px;overflow:hidden;color:#3a3a3a;line-height:9px">Ватрушкин Игорь Толсть</div>
<div class="t" style="left:309.5px;top:490.5px;color:#3a3a3a;font-size:7px;line-height:9px">2Г.81</div>
<div class="t" style="left:340px;top:490.5px;width:42px;text-align:right;color:#3a3a3a;line-height:9px">30</div>
<div class="t" style="left:187px;top:499.5px;color:#3a3a3a;font-size:7px;line-height:9px">06.04</div>
<div class="t" style="left:221.6px;top:499.5px;width:78.8px;overflow:hidden;color:#3a3a3a;line-height:9px">Капустин Пётр Листовой</div>
<div class="t" style="left:309.5px;top:499.5px;color:#3a3a3a;font-size:7px;line-height:9px">1Г.75</div>
<div class="t" style="left:340px;top:499.5px;width:42px;text-align:right;color:#3a3a3a;line-height:9px">30</div>
<div class="t" style="left:187px;top:508.5px;color:#3a3a3a;font-size:7px;line-height:9px">06.04</div>
<div class="t" style="left:221.6px;top:508.5px;width:78.8px;overflow:hidden;color:#3a3a3a;line-height:9px">Овсянников Евгений Гер</div>
<div class="t" style="left:309.5px;top:508.5px;color:#3a3a3a;font-size:7px;line-height:9px">3Г.65</div>
<div class="t" style="left:340px;top:508.5px;width:42px;text-align:right;color:#3a3a3a;line-height:9px">30</div>
<div class="t" style="left:187px;top:518.5px;color:#3a3a3a;font-size:7px;line-height:9px">06.04</div>
<div class="t" style="left:221.6px;top:518.5px;width:78.8px;overflow:hidden;color:#3a3a3a;line-height:9px">Овсянников Евгений Гер</div>
<div class="t" style="left:309.5px;top:518.5px;color:#3a3a3a;font-size:7px;line-height:9px">1Г.81</div>
<div class="t" style="left:340px;top:518.5px;width:42px;text-align:right;color:#3a3a3a;line-height:9px">30</div>
<div class="t" style="left:187px;top:527.5px;color:#3a3a3a;font-size:7px;line-height:9px">06.04</div>
<div class="t" style="left:221.6px;top:527.5px;width:78.8px;overflow:hidden;color:#3a3a3a;line-height:9px">Сухаревский Даниил Бе</div>
<div class="t" style="left:309.5px;top:527.5px;color:#3a3a3a;font-size:7px;line-height:9px">1Г.75</div>
<div class="t" style="left:340px;top:527.5px;width:42px;text-align:right;color:#3a3a3a;line-height:9px">30</div>
<div class="t" style="left:179px;top:536.5px;color:#3a3a3a;font-size:7px;line-height:9px">07.04</div>
<div style="left:153px;top:537px;width:8px;height:8px;border:1px solid #cfcfcf;border-radius:2px;background:#fff"></div>
<div style="left:155px;top:540px;width:4px;height:1px;background:#8a8a8a"></div>
<div class="t" style="left:187px;top:545.5px;color:#3a3a3a;font-size:7px;line-height:9px">07.04</div>
<div class="t" style="left:221.6px;top:545.5px;width:78.8px;overflow:hidden;color:#3a3a3a;line-height:9px">Абрикосов Захарий Юж</div>
<div class="t" style="left:309.5px;top:545.5px;color:#3a3a3a;font-size:7px;line-height:9px">3Г.64</div>
<div class="t" style="left:340px;top:545.5px;width:42px;text-align:right;color:#3a3a3a;line-height:9px">30</div>
<div style="left:689px;top:150px;width:24px;height:9px;background:#009a3e;border-left:1px solid #5c5c5c"></div>
<div style="left:713px;top:150px;width:26px;height:9px;background:#c2c2c2;border-left:1px solid #5c5c5c"></div>
<div style="left:739px;top:150px;width:24px;height:9px;background:#c2c2c2;border-left:1px solid #5c5c5c"></div>
<div style="left:763px;top:150px;width:25px;height:9px;background:#c2c2c2;border-left:1px solid #5c5c5c"></div>
<div style="left:788px;top:150px;width:25px;height:9px;background:#c2c2c2;border-left:1px solid #5c5c5c"></div>
<div style="left:813px;top:150px;width:25px;height:9px;background:#c2c2c2;border-left:1px solid #5c5c5c"></div>
<div style="left:838px;top:150px;width:25px;height:9px;background:#009a3e;border-left:1px solid #5c5c5c"></div>
<div style="left:863px;top:150px;width:24px;height:9px;background:#c2c2c2;border-left:1px solid #5c5c5c"></div>
<div style="left:887px;top:150px;width:25px;height:9px;background:#c2c2c2;border-left:1px solid #5c5c5c"></div>
<div style="left:912px;top:150px;width:25px;height:9px;background:#c2c2c2;border-left:1px solid #5c5c5c"></div>
<div style="left:937px;top:150px;width:25px;height:9px;background:#c2c2c2;border-left:1px solid #5c5c5c"></div>
<div style="left:962px;top:150px;width:25px;height:9px;background:#c2c2c2;border-left:1px solid #5c5c5c"></div>
<div style="left:391px;top:159px;width:25px;height:10px;background:#c2c2c2;border-left:1px solid #5c5c5c"></div>
<div style="left:416px;top:159px;width:25px;height:10px;background:#c2c2c2;border-left:1px solid #5c5c5c"></div>
<div style="left:441px;top:159px;width:24px;height:10px;background:#c2c2c2;border-left:1px solid #5c5c5c"></div>
<div style="left:465px;top:159px;width:25px;height:10px;background:#c2c2c2;border-left:1px solid #5c5c5c"></div>
<div style="left:490px;top:159px;width:25px;height:10px;background:#c2c2c2;border-left:1px solid #5c5c5c"></div>
<div style="left:515px;top:159px;width:25px;height:10px;background:#c2c2c2;border-left:1px solid #5c5c5c"></div>
<div style="left:540px;top:159px;width:25px;height:10px;background:#c2c2c2;border-left:1px solid #5c5c5c"></div>
<div style="left:565px;top:159px;width:25px;height:10px;background:#c2c2c2;border-left:1px solid #5c5c5c"></div>
<div style="left:590px;top:159px;width:24px;height:10px;background:#c2c2c2;border-left:1px solid #5c5c5c"></div>
<div style="left:614px;top:159px;width:25px;height:10px;background:#c2c2c2;border-left:1px solid #5c5c5c"></div>
<div style="left:639px;top:159px;width:25px;height:10px;background:#c2c2c2;border-left:1px solid #5c5c5c"></div>
<div style="left:664px;top:159px;width:25px;height:10px;background:#009a3e;border-left:1px solid #5c5c5c"></div>
<div style="left:689px;top:169px;width:24px;height:9px;background:#c2c2c2;border-left:1px solid #5c5c5c"></div>
<div style="left:713px;top:169px;width:26px;height:9px;background:#c2c2c2;border-left:1px solid #5c5c5c"></div>
<div style="left:739px;top:169px;width:24px;height:9px;background:#c2c2c2;border-left:1px solid #5c5c5c"></div>
<div style="left:763px;top:169px;width:25px;height:9px;background:#c2c2c2;border-left:1px solid #5c5c5c"></div>
<div style="left:788px;top:169px;width:25px;height:9px;background:#c2c2c2;border-left:1px solid #5c5c5c"></div>
<div style="left:813px;top:169px;width:25px;height:9px;background:#c2c2c2;border-left:1px solid #5c5c5c"></div>
<div style="left:838px;top:169px;width:25px;height:9px;background:#009a3e;border-left:1px solid #5c5c5c"></div>
<div style="left:863px;top:169px;width:24px;height:9px;background:#c2c2c2;border-left:1px solid #5c5c5c"></div>
<div style="left:887px;top:169px;width:25px;height:9px;background:#c2c2c2;border-left:1px solid #5c5c5c"></div>
<div style="left:912px;top:169px;width:25px;height:9px;background:#c2c2c2;border-left:1px solid #5c5c5c"></div>
<div style="left:937px;top:169px;width:25px;height:9px;background:#c2c2c2;border-left:1px solid #5c5c5c"></div>
<div style="left:962px;top:169px;width:25px;height:9px;background:#c2c2c2;border-left:1px solid #5c5c5c"></div>
<div style="left:391px;top:178px;width:25px;height:9px;background:#c2c2c2;border-left:1px solid #5c5c5c"></div>
<div style="left:416px;top:178px;width:25px;height:9px;background:#c2c2c2;border-left:1px solid #5c5c5c"></div>
<div style="left:441px;top:178px;width:24px;height:9px;background:#c2c2c2;border-left:1px solid #5c5c5c"></div>
<div style="left:465px;top:178px;width:25px;height:9px;background:#c2c2c2;border-left:1px solid #5c5c5c"></div>
<div style="left:490px;top:178px;width:25px;height:9px;background:#c2c2c2;border-left:1px solid #5c5c5c"></div>
<div style="left:515px;top:178px;width:25px;height:9px;background:#c2c2c2;border-left:1px solid #5c5c5c"></div>
<div style="left:540px;top:178px;width:25px;height:9px;background:#c2c2c2;border-left:1px solid #5c5c5c"></div>
<div style="left:565px;top:178px;width:25px;height:9px;background:#c2c2c2;border-left:1px solid #5c5c5c"></div>
<div style="left:590px;top:178px;width:24px;height:9px;background:#c2c2c2;border-left:1px solid #5c5c5c"></div>
<div style="left:614px;top:178px;width:25px;height:9px;background:#c2c2c2;border-left:1px solid #5c5c5c"></div>
<div style="left:639px;top:178px;width:25px;height:9px;background:#c2c2c2;border-left:1px solid #5c5c5c"></div>
<div style="left:664px;top:178px;width:25px;height:9px;background:#c2c2c2;border-left:1px solid #5c5c5c"></div>
<div style="left:689px;top:178px;width:24px;height:9px;background:#c2c2c2;border-left:1px solid #5c5c5c"></div>
<div style="left:713px;top:178px;width:26px;height:9px;background:#c2c2c2;border-left:1px solid #5c5c5c"></div>
<div style="left:739px;top:178px;width:24px;height:9px;background:#c2c2c2;border-left:1px solid #5c5c5c"></div>
<div style="left:763px;top:178px;width:25px;height:9px;background:#c2c2c2;border-left:1px solid #5c5c5c"></div>
<div style="left:391px;top:187px;width:17px;height:9px;background:#c2c2c2;border-left:1px solid #5c5c5c"></div>
<div style="left:408px;top:187px;width:16px;height:9px;background:#c2c2c2;border-left:1px solid #5c5c5c"></div>
<div style="left:424px;top:187px;width:17px;height:9px;background:#c2c2c2;border-left:1px solid #5c5c5c"></div>
<div style="left:441px;top:187px;width:16px;height:9px;background:#c2c2c2;border-left:1px solid #5c5c5c"></div>
<div style="left:457px;top:187px;width:17px;height:9px;background:#c2c2c2;border-left:1px solid #5c5c5c"></div>
<div style="left:474px;top:187px;width:16px;height:9px;background:#c2c2c2;border-left:1px solid #5c5c5c"></div>
<div style="left:490px;top:187px;width:17px;height:9px;background:#c2c2c2;border-left:1px solid #5c5c5c"></div>
<div style="left:507px;top:187px;width:16px;height:9px;background:#c2c2c2;border-left:1px solid #5c5c5c"></div>
<div style="left:523px;top:187px;width:17px;height:9px;background:#c2c2c2;border-left:1px solid #5c5c5c"></div>
<div style="left:540px;top:187px;width:16px;height:9px;background:#c2c2c2;border-left:1px solid #5c5c5c"></div>
<div style="left:556px;top:187px;width:17px;height:9px;background:#c2c2c2;border-left:1px solid #5c5c5c"></div>
<div style="left:573px;top:187px;width:17px;height:9px;background:#c2c2c2;border-left:1px solid #5c5c5c"></div>
<div style="left:590px;top:187px;width:17px;height:9px;background:#c2c2c2;border-left:1px solid #5c5c5c"></div>
<div style="left:607px;top:187px;width:16px;height:9px;background:#c2c2c2;border-left:1px solid #5c5c5c"></div>
<div style="left:623px;top:187px;width:16px;height:9px;background:#c2c2c2;border-left:1px solid #5c5c5c"></div>
<div style="left:639px;top:187px;width:17px;height:9px;background:#c2c2c2;border-left:1px solid #5c5c5c"></div>
<div style="left:656px;top:187px;width:16px;height:9px;background:#c2c2c2;border-left:1px solid #5c5c5c"></div>
<div style="left:672px;top:187px;width:17px;height:9px;background:#c2c2c2;border-left:1px solid #5c5c5c"></div>
<div style="left:391px;top:196px;width:25px;height:9px;background:#c2c2c2;border-left:1px solid #5c5c5c"></div>
<div style="left:416px;top:196px;width:25px;height:9px;background:#c2c2c2;border-left:1px solid #5c5c5c"></div>
<div style="left:441px;top:196px;width:24px;height:9px;background:#c2c2c2;border-left:1px solid #5c5c5c"></div>
<div style="left:465px;top:196px;width:25px;height:9px;background:#3da563;border-left:1px solid #5c5c5c"></div>
<div style="left:490px;top:196px;width:25px;height:9px;background:#c2c2c2;border-left:1px solid #5c5c5c"></div>
<div style="left:515px;top:196px;width:25px;height:9px;background:#c2c2c2;border-left:1px solid #5c5c5c"></div>
<div style="left:540px;top:196px;width:25px;height:9px;background:#c2c2c2;border-left:1px solid #5c5c5c"></div>
<div style="left:565px;top:196px;width:25px;height:9px;background:#c2c2c2;border-left:1px solid #5c5c5c"></div>
<div style="left:590px;top:196px;width:24px;height:9px;background:#c2c2c2;border-left:1px solid #5c5c5c"></div>
<div style="left:614px;top:196px;width:25px;height:9px;background:#c2c2c2;border-left:1px solid #5c5c5c"></div>
<div style="left:639px;top:196px;width:25px;height:9px;background:#c2c2c2;border-left:1px solid #5c5c5c"></div>
<div style="left:664px;top:196px;width:25px;height:9px;background:#c2c2c2;border-left:1px solid #5c5c5c"></div>
<div style="left:689px;top:196px;width:24px;height:9px;background:#c2c2c2;border-left:1px solid #5c5c5c"></div>
<div style="left:713px;top:196px;width:26px;height:9px;background:#c2c2c2;border-left:1px solid #5c5c5c"></div>
<div style="left:739px;top:196px;width:24px;height:9px;background:#c2c2c2;border-left:1px solid #5c5c5c"></div>
<div style="left:763px;top:196px;width:25px;height:9px;background:#c2c2c2;border-left:1px solid #5c5c5c"></div>
<div style="left:788px;top:196px;width:25px;height:9px;background:#c2c2c2;border-left:1px solid #5c5c5c"></div>
<div style="left:813px;top:196px;width:25px;height:9px;background:#c2c2c2;border-left:1px solid #5c5c5c"></div>
<div style="left:838px;top:196px;width:25px;height:9px;background:#c2c2c2;border-left:1px solid #5c5c5c"></div>
<div style="left:863px;top:196px;width:24px;height:9px;background:#c2c2c2;border-left:1px solid #5c5c5c"></div>
<div style="left:887px;top:196px;width:25px;height:9px;background:#c2c2c2;border-left:1px solid #5c5c5c"></div>
<div style="left:912px;top:196px;width:25px;height:9px;background:#c2c2c2;border-left:1px solid #5c5c5c"></div>
<div style="left:937px;top:196px;width:25px;height:9px;background:#c2c2c2;border-left:1px solid #5c5c5c"></div>
<div style="left:962px;top:196px;width:25px;height:9px;background:#c2c2c2;border-left:1px solid #5c5c5c"></div>
<div style="left:391px;top:205px;width:25px;height:10px;background:#c2c2c2;border-left:1px solid #5c5c5c"></div>
<div style="left:416px;top:205px;width:25px;height:10px;background:#c2c2c2;border-left:1px solid #5c5c5c"></div>
<div style="left:441px;top:205px;width:24px;height:10px;background:#c2c2c2;border-left:1px solid #5c5c5c"></div>
<div style="left:465px;top:205px;width:25px;height:10px;background:#009a3e;border-left:1px solid #5c5c5c"></div>
<div style="left:490px;top:205px;width:25px;height:10px;background:#c2c2c2;border-left:1px solid #5c5c5c"></div>
<div style="left:515px;top:205px;width:25px;height:10px;background:#c2c2c2;border-left:1px solid #5c5c5c"></div>
<div style="left:540px;top:205px;width:25px;height:10px;background:#c2c2c2;border-left:1px solid #5c5c5c"></div>
<div style="left:565px;top:205px;width:25px;height:10px;background:#c2c2c2;border-left:1px solid #5c5c5c"></div>
<div style="left:590px;top:205px;width:24px;height:10px;background:#009a3e;border-left:1px solid #5c5c5c"></div>
<div style="left:614px;top:205px;width:25px;height:10px;background:#c2c2c2;border-left:1px solid #5c5c5c"></div>
<div style="left:639px;top:205px;width:25px;height:10px;background:#c2c2c2;border-left:1px solid #5c5c5c"></div>
<div style="left:664px;top:205px;width:25px;height:10px;background:#c2c2c2;border-left:1px solid #5c5c5c"></div>
<div style="left:689px;top:205px;width:24px;height:10px;background:#c2c2c2;border-left:1px solid #5c5c5c"></div>
<div style="left:713px;top:205px;width:26px;height:10px;background:#c2c2c2;border-left:1px solid #5c5c5c"></div>
<div style="left:739px;top:205px;width:24px;height:10px;background:#c2c2c2;border-left:1px solid #5c5c5c"></div>
<div style="left:763px;top:205px;width:25px;height:10px;background:#c2c2c2;border-left:1px solid #5c5c5c"></div>
<div style="left:788px;top:205px;width:25px;height:10px;background:#c2c2c2;border-left:1px solid #5c5c5c"></div>
<div style="left:813px;top:205px;width:25px;height:10px;background:#c2c2c2;border-left:1px solid #5c5c5c"></div>
<div style="left:838px;top:205px;width:25px;height:10px;background:#c2c2c2;border-left:1px solid #5c5c5c"></div>
<div style="left:863px;top:205px;width:24px;height:10px;background:#c2c2c2;border-left:1px solid #5c5c5c"></div>
<div style="left:391px;top:215px;width:25px;height:9px;background:#c2c2c2;border-left:1px solid #5c5c5c"></div>
<div style="left:416px;top:215px;width:25px;height:9px;background:#c2c2c2;border-left:1px solid #5c5c5c"></div>
<div style="left:441px;top:215px;width:24px;height:9px;background:#c2c2c2;border-left:1px solid #5c5c5c"></div>
<div style="left:465px;top:215px;width:25px;height:9px;background:#009a3e;border-left:1px solid #5c5c5c"></div>
<div style="left:490px;top:215px;width:25px;height:9px;background:#c2c2c2;border-left:1px solid #5c5c5c"></div>
<div style="left:515px;top:215px;width:25px;height:9px;background:#c2c2c2;border-left:1px solid #5c5c5c"></div>
<div style="left:540px;top:215px;width:25px;height:9px;background:#c2c2c2;border-left:1px solid #5c5c5c"></div>
<div style="left:565px;top:215px;width:25px;height:9px;background:#c2c2c2;border-left:1px solid #5c5c5c"></div>
<div style="left:590px;top:215px;width:24px;height:9px;background:#c2c2c2;border-left:1px solid #5c5c5c"></div>
<div style="left:614px;top:215px;width:25px;height:9px;background:#c2c2c2;border-left:1px solid #5c5c5c"></div>
<div style="left:639px;top:215px;width:25px;height:9px;background:#c2c2c2;border-left:1px solid #5c5c5c"></div>
<div style="left:664px;top:215px;width:25px;height:9px;background:#009a3e;border-left:1px solid #5c5c5c"></div>
<div style="left:689px;top:215px;width:24px;height:9px;background:#c2c2c2;border-left:1px solid #5c5c5c"></div>
<div style="left:713px;top:215px;width:26px;height:9px;background:#c2c2c2;border-left:1px solid #5c5c5c"></div>
<div style="left:739px;top:215px;width:24px;height:9px;background:#c2c2c2;border-left:1px solid #5c5c5c"></div>
<div style="left:763px;top:215px;width:25px;height:9px;background:#c2c2c2;border-left:1px solid #5c5c5c"></div>
<div style="left:788px;top:215px;width:25px;height:9px;background:#c2c2c2;border-left:1px solid #5c5c5c"></div>
<div style="left:813px;top:215px;width:25px;height:9px;background:#c2c2c2;border-left:1px solid #5c5c5c"></div>
<div style="left:838px;top:215px;width:25px;height:9px;background:#009a3e;border-left:1px solid #5c5c5c"></div>
<div style="left:863px;top:215px;width:24px;height:9px;background:#c2c2c2;border-left:1px solid #5c5c5c"></div>
<div style="left:887px;top:215px;width:25px;height:9px;background:#c2c2c2;border-left:1px solid #5c5c5c"></div>
<div style="left:912px;top:215px;width:25px;height:9px;background:#c2c2c2;border-left:1px solid #5c5c5c"></div>
<div style="left:937px;top:215px;width:25px;height:9px;background:#c2c2c2;border-left:1px solid #5c5c5c"></div>
<div style="left:962px;top:215px;width:25px;height:9px;background:#c2c2c2;border-left:1px solid #5c5c5c"></div>
<div style="left:391px;top:233px;width:25px;height:9px;background:#c2c2c2;border-left:1px solid #5c5c5c"></div>
<div style="left:416px;top:233px;width:25px;height:9px;background:#c2c2c2;border-left:1px solid #5c5c5c"></div>
<div style="left:441px;top:233px;width:24px;height:9px;background:#c2c2c2;border-left:1px solid #5c5c5c"></div>
<div style="left:465px;top:233px;width:25px;height:9px;background:#c2c2c2;border-left:1px solid #5c5c5c"></div>
<div style="left:490px;top:233px;width:25px;height:9px;background:#c2c2c2;border-left:1px solid #5c5c5c"></div>
<div style="left:515px;top:233px;width:25px;height:9px;background:#c2c2c2;border-left:1px solid #5c5c5c"></div>
<div style="left:540px;top:233px;width:25px;height:9px;background:#c2c2c2;border-left:1px solid #5c5c5c"></div>
<div style="left:565px;top:233px;width:25px;height:9px;background:#c2c2c2;border-left:1px solid #5c5c5c"></div>
<div style="left:590px;top:233px;width:24px;height:9px;background:#c2c2c2;border-left:1px solid #5c5c5c"></div>
<div style="left:614px;top:233px;width:25px;height:9px;background:#c2c2c2;border-left:1px solid #5c5c5c"></div>
<div style="left:639px;top:233px;width:25px;height:9px;background:#c2c2c2;border-left:1px solid #5c5c5c"></div>
<div style="left:664px;top:233px;width:25px;height:9px;background:#009a3e;border-left:1px solid #5c5c5c"></div>
<div style="left:689px;top:233px;width:24px;height:9px;background:#c2c2c2;border-left:1px solid #5c5c5c"></div>
<div style="left:713px;top:233px;width:26px;height:9px;background:#c2c2c2;border-left:1px solid #5c5c5c"></div>
<div style="left:739px;top:233px;width:24px;height:9px;background:#c2c2c2;border-left:1px solid #5c5c5c"></div>
<div style="left:763px;top:233px;width:25px;height:9px;background:#c2c2c2;border-left:1px solid #5c5c5c"></div>
<div style="left:788px;top:233px;width:25px;height:9px;background:#c2c2c2;border-left:1px solid #5c5c5c"></div>
<div style="left:813px;top:233px;width:25px;height:9px;background:#c2c2c2;border-left:1px solid #5c5c5c"></div>
<div style="left:838px;top:233px;width:25px;height:9px;background:#009a3e;border-left:1px solid #5c5c5c"></div>
<div style="left:863px;top:233px;width:24px;height:9px;background:#c2c2c2;border-left:1px solid #5c5c5c"></div>
<div style="left:887px;top:233px;width:25px;height:9px;background:#c2c2c2;border-left:1px solid #5c5c5c"></div>
<div style="left:912px;top:233px;width:25px;height:9px;background:#c2c2c2;border-left:1px solid #5c5c5c"></div>
<div style="left:937px;top:233px;width:25px;height:9px;background:#c2c2c2;border-left:1px solid #5c5c5c"></div>
<div style="left:962px;top:233px;width:25px;height:9px;background:#c2c2c2;border-left:1px solid #5c5c5c"></div>
<div style="left:391px;top:242px;width:25px;height:9px;background:#c2c2c2;border-left:1px solid #5c5c5c"></div>
<div style="left:416px;top:242px;width:25px;height:9px;background:#c2c2c2;border-left:1px solid #5c5c5c"></div>
<div style="left:441px;top:242px;width:24px;height:9px;background:#c2c2c2;border-left:1px solid #5c5c5c"></div>
<div style="left:465px;top:242px;width:25px;height:9px;background:#c2c2c2;border-left:1px solid #5c5c5c"></div>
<div style="left:490px;top:242px;width:25px;height:9px;background:#c2c2c2;border-left:1px solid #5c5c5c"></div>
<div style="left:515px;top:242px;width:25px;height:9px;background:#c2c2c2;border-left:1px solid #5c5c5c"></div>
<div style="left:540px;top:242px;width:25px;height:9px;background:#c2c2c2;border-left:1px solid #5c5c5c"></div>
<div style="left:565px;top:242px;width:25px;height:9px;background:#c2c2c2;border-left:1px solid #5c5c5c"></div>
<div style="left:590px;top:242px;width:24px;height:9px;background:#c2c2c2;border-left:1px solid #5c5c5c"></div>
<div style="left:614px;top:242px;width:25px;height:9px;background:#c2c2c2;border-left:1px solid #5c5c5c"></div>
<div style="left:639px;top:242px;width:25px;height:9px;background:#c2c2c2;border-left:1px solid #5c5c5c"></div>
<div style="left:664px;top:242px;width:25px;height:9px;background:#c2c2c2;border-left:1px solid #5c5c5c"></div>
<div style="left:689px;top:242px;width:24px;height:9px;background:#c2c2c2;border-left:1px solid #5c5c5c"></div>
<div style="left:713px;top:242px;width:26px;height:9px;background:#c2c2c2;border-left:1px solid #5c5c5c"></div>
<div style="left:739px;top:242px;width:24px;height:9px;background:#c2c2c2;border-left:1px solid #5c5c5c"></div>
<div style="left:763px;top:242px;width:25px;height:9px;background:#c2c2c2;border-left:1px solid #5c5c5c"></div>
<div style="left:391px;top:251px;width:25px;height:9px;background:#c2c2c2;border-left:1px solid #5c5c5c"></div>
<div style="left:416px;top:251px;width:25px;height:9px;background:#c2c2c2;border-left:1px solid #5c5c5c"></div>
<div style="left:441px;top:251px;width:24px;height:9px;background:#c2c2c2;border-left:1px solid #5c5c5c"></div>
<div style="left:465px;top:251px;width:25px;height:9px;background:#c2c2c2;border-left:1px solid #5c5c5c"></div>
<div style="left:490px;top:251px;width:25px;height:9px;background:#c2c2c2;border-left:1px solid #5c5c5c"></div>
<div style="left:515px;top:251px;width:25px;height:9px;background:#c2c2c2;border-left:1px solid #5c5c5c"></div>
<div style="left:540px;top:251px;width:25px;height:9px;background:#c2c2c2;border-left:1px solid #5c5c5c"></div>
<div style="left:565px;top:251px;width:25px;height:9px;background:#c2c2c2;border-left:1px solid #5c5c5c"></div>
<div style="left:590px;top:251px;width:24px;height:9px;background:#c2c2c2;border-left:1px solid #5c5c5c"></div>
<div style="left:614px;top:251px;width:25px;height:9px;background:#c2c2c2;border-left:1px solid #5c5c5c"></div>
<div style="left:639px;top:251px;width:25px;height:9px;background:#c2c2c2;border-left:1px solid #5c5c5c"></div>
<div style="left:664px;top:251px;width:25px;height:9px;background:#009a3e;border-left:1px solid #5c5c5c"></div>
<div style="left:689px;top:251px;width:24px;height:9px;background:#c2c2c2;border-left:1px solid #5c5c5c"></div>
<div style="left:713px;top:251px;width:26px;height:9px;background:#c2c2c2;border-left:1px solid #5c5c5c"></div>
<div style="left:739px;top:251px;width:24px;height:9px;background:#c2c2c2;border-left:1px solid #5c5c5c"></div>
<div style="left:763px;top:251px;width:25px;height:9px;background:#c2c2c2;border-left:1px solid #5c5c5c"></div>
<div style="left:788px;top:251px;width:25px;height:9px;background:#c2c2c2;border-left:1px solid #5c5c5c"></div>
<div style="left:813px;top:251px;width:25px;height:9px;background:#c2c2c2;border-left:1px solid #5c5c5c"></div>
<div style="left:838px;top:251px;width:25px;height:9px;background:#009a3e;border-left:1px solid #5c5c5c"></div>
<div style="left:863px;top:251px;width:24px;height:9px;background:#c2c2c2;border-left:1px solid #5c5c5c"></div>
<div style="left:887px;top:251px;width:25px;height:9px;background:#c2c2c2;border-left:1px solid #5c5c5c"></div>
<div style="left:912px;top:251px;width:25px;height:9px;background:#c2c2c2;border-left:1px solid #5c5c5c"></div>
<div style="left:937px;top:251px;width:25px;height:9px;background:#c2c2c2;border-left:1px solid #5c5c5c"></div>
<div style="left:962px;top:251px;width:25px;height:9px;background:#c2c2c2;border-left:1px solid #5c5c5c"></div>
<div style="left:689px;top:260px;width:24px;height:10px;background:#c2c2c2;border-left:1px solid #5c5c5c"></div>
<div style="left:713px;top:260px;width:26px;height:10px;background:#c2c2c2;border-left:1px solid #5c5c5c"></div>
<div style="left:739px;top:260px;width:24px;height:10px;background:#c2c2c2;border-left:1px solid #5c5c5c"></div>
<div style="left:763px;top:260px;width:25px;height:10px;background:#c2c2c2;border-left:1px solid #5c5c5c"></div>
<div style="left:788px;top:260px;width:25px;height:10px;background:#c2c2c2;border-left:1px solid #5c5c5c"></div>
<div style="left:813px;top:260px;width:25px;height:10px;background:#c2c2c2;border-left:1px solid #5c5c5c"></div>
<div style="left:838px;top:260px;width:25px;height:10px;background:#009a3e;border-left:1px solid #5c5c5c"></div>
<div style="left:863px;top:260px;width:24px;height:10px;background:#c2c2c2;border-left:1px solid #5c5c5c"></div>
<div style="left:887px;top:260px;width:25px;height:10px;background:#c2c2c2;border-left:1px solid #5c5c5c"></div>
<div style="left:912px;top:260px;width:25px;height:10px;background:#c2c2c2;border-left:1px solid #5c5c5c"></div>
<div style="left:937px;top:260px;width:25px;height:10px;background:#c2c2c2;border-left:1px solid #5c5c5c"></div>
<div style="left:962px;top:260px;width:25px;height:10px;background:#c2c2c2;border-left:1px solid #5c5c5c"></div>
<div style="left:391px;top:270px;width:25px;height:9px;background:#c2c2c2;border-left:1px solid #5c5c5c"></div>
<div style="left:416px;top:270px;width:25px;height:9px;background:#c2c2c2;border-left:1px solid #5c5c5c"></div>
<div style="left:441px;top:270px;width:24px;height:9px;background:#c2c2c2;border-left:1px solid #5c5c5c"></div>
<div style="left:465px;top:270px;width:25px;height:9px;background:#c2c2c2;border-left:1px solid #5c5c5c"></div>
<div style="left:490px;top:270px;width:25px;height:9px;background:#c2c2c2;border-left:1px solid #5c5c5c"></div>
<div style="left:515px;top:270px;width:25px;height:9px;background:#c2c2c2;border-left:1px solid #5c5c5c"></div>
<div style="left:540px;top:270px;width:25px;height:9px;background:#c2c2c2;border-left:1px solid #5c5c5c"></div>
<div style="left:565px;top:270px;width:25px;height:9px;background:#c2c2c2;border-left:1px solid #5c5c5c"></div>
<div style="left:590px;top:270px;width:24px;height:9px;background:#c2c2c2;border-left:1px solid #5c5c5c"></div>
<div style="left:614px;top:270px;width:25px;height:9px;background:#c2c2c2;border-left:1px solid #5c5c5c"></div>
<div style="left:639px;top:270px;width:25px;height:9px;background:#c2c2c2;border-left:1px solid #5c5c5c"></div>
<div style="left:664px;top:270px;width:25px;height:9px;background:#009a3e;border-left:1px solid #5c5c5c"></div>
<div style="left:391px;top:288px;width:25px;height:9px;background:#c2c2c2;border-left:1px solid #5c5c5c"></div>
<div style="left:416px;top:288px;width:25px;height:9px;background:#c2c2c2;border-left:1px solid #5c5c5c"></div>
<div style="left:441px;top:288px;width:24px;height:9px;background:#c2c2c2;border-left:1px solid #5c5c5c"></div>
<div style="left:465px;top:288px;width:25px;height:9px;background:#c2c2c2;border-left:1px solid #5c5c5c"></div>
<div style="left:490px;top:288px;width:25px;height:9px;background:#c2c2c2;border-left:1px solid #5c5c5c"></div>
<div style="left:515px;top:288px;width:25px;height:9px;background:#c2c2c2;border-left:1px solid #5c5c5c"></div>
<div style="left:540px;top:288px;width:25px;height:9px;background:#c2c2c2;border-left:1px solid #5c5c5c"></div>
<div style="left:565px;top:288px;width:25px;height:9px;background:#c2c2c2;border-left:1px solid #5c5c5c"></div>
<div style="left:590px;top:288px;width:24px;height:9px;background:#c2c2c2;border-left:1px solid #5c5c5c"></div>
<div style="left:614px;top:288px;width:25px;height:9px;background:#c2c2c2;border-left:1px solid #5c5c5c"></div>
<div style="left:639px;top:288px;width:25px;height:9px;background:#c2c2c2;border-left:1px solid #5c5c5c"></div>
<div style="left:664px;top:288px;width:25px;height:9px;background:#009a3e;border-left:1px solid #5c5c5c"></div>
<div style="left:689px;top:288px;width:24px;height:9px;background:#c2c2c2;border-left:1px solid #5c5c5c"></div>
<div style="left:713px;top:288px;width:26px;height:9px;background:#c2c2c2;border-left:1px solid #5c5c5c"></div>
<div style="left:739px;top:288px;width:24px;height:9px;background:#c2c2c2;border-left:1px solid #5c5c5c"></div>
<div style="left:763px;top:288px;width:25px;height:9px;background:#c2c2c2;border-left:1px solid #5c5c5c"></div>
<div style="left:788px;top:288px;width:25px;height:9px;background:#c2c2c2;border-left:1px solid #5c5c5c"></div>
<div style="left:813px;top:288px;width:25px;height:9px;background:#c2c2c2;border-left:1px solid #5c5c5c"></div>
<div style="left:838px;top:288px;width:25px;height:9px;background:#009a3e;border-left:1px solid #5c5c5c"></div>
<div style="left:863px;top:288px;width:24px;height:9px;background:#c2c2c2;border-left:1px solid #5c5c5c"></div>
<div style="left:887px;top:288px;width:25px;height:9px;background:#c2c2c2;border-left:1px solid #5c5c5c"></div>
<div style="left:912px;top:288px;width:25px;height:9px;background:#c2c2c2;border-left:1px solid #5c5c5c"></div>
<div style="left:937px;top:288px;width:25px;height:9px;background:#c2c2c2;border-left:1px solid #5c5c5c"></div>
<div style="left:962px;top:288px;width:25px;height:9px;background:#c2c2c2;border-left:1px solid #5c5c5c"></div>
<div style="left:391px;top:297px;width:25px;height:9px;background:#c2c2c2;border-left:1px solid #5c5c5c"></div>
<div style="left:416px;top:297px;width:25px;height:9px;background:#c2c2c2;border-left:1px solid #5c5c5c"></div>
<div style="left:441px;top:297px;width:24px;height:9px;background:#c2c2c2;border-left:1px solid #5c5c5c"></div>
<div style="left:465px;top:297px;width:25px;height:9px;background:#c2c2c2;border-left:1px solid #5c5c5c"></div>
<div style="left:490px;top:297px;width:25px;height:9px;background:#c2c2c2;border-left:1px solid #5c5c5c"></div>
<div style="left:515px;top:297px;width:25px;height:9px;background:#c2c2c2;border-left:1px solid #5c5c5c"></div>
<div style="left:540px;top:297px;width:25px;height:9px;background:#c2c2c2;border-left:1px solid #5c5c5c"></div>
<div style="left:565px;top:297px;width:25px;height:9px;background:#c2c2c2;border-left:1px solid #5c5c5c"></div>
<div style="left:590px;top:297px;width:24px;height:9px;background:#c2c2c2;border-left:1px solid #5c5c5c"></div>
<div style="left:614px;top:297px;width:25px;height:9px;background:#c2c2c2;border-left:1px solid #5c5c5c"></div>
<div style="left:639px;top:297px;width:25px;height:9px;background:#c2c2c2;border-left:1px solid #5c5c5c"></div>
<div style="left:664px;top:297px;width:25px;height:9px;background:#009a3e;border-left:1px solid #5c5c5c"></div>
<div style="left:689px;top:297px;width:24px;height:9px;background:#c2c2c2;border-left:1px solid #5c5c5c"></div>
<div style="left:713px;top:297px;width:26px;height:9px;background:#c2c2c2;border-left:1px solid #5c5c5c"></div>
<div style="left:739px;top:297px;width:24px;height:9px;background:#c2c2c2;border-left:1px solid #5c5c5c"></div>
<div style="left:763px;top:297px;width:25px;height:9px;background:#c2c2c2;border-left:1px solid #5c5c5c"></div>
<div style="left:788px;top:297px;width:25px;height:9px;background:#c2c2c2;border-left:1px solid #5c5c5c"></div>
<div style="left:813px;top:297px;width:25px;height:9px;background:#c2c2c2;border-left:1px solid #5c5c5c"></div>
<div style="left:838px;top:297px;width:25px;height:9px;background:#009a3e;border-left:1px solid #5c5c5c"></div>
<div style="left:863px;top:297px;width:24px;height:9px;background:#c2c2c2;border-left:1px solid #5c5c5c"></div>
<div style="left:887px;top:297px;width:25px;height:9px;background:#c2c2c2;border-left:1px solid #5c5c5c"></div>
<div style="left:912px;top:297px;width:25px;height:9px;background:#c2c2c2;border-left:1px solid #5c5c5c"></div>
<div style="left:937px;top:297px;width:25px;height:9px;background:#c2c2c2;border-left:1px solid #5c5c5c"></div>
<div style="left:962px;top:297px;width:25px;height:9px;background:#c2c2c2;border-left:1px solid #5c5c5c"></div>
<div style="left:689px;top:306px;width:24px;height:10px;background:#c2c2c2;border-left:1px solid #5c5c5c"></div>
<div style="left:713px;top:306px;width:26px;height:10px;background:#c2c2c2;border-left:1px solid #5c5c5c"></div>
<div style="left:739px;top:306px;width:24px;height:10px;background:#c2c2c2;border-left:1px solid #5c5c5c"></div>
<div style="left:763px;top:306px;width:25px;height:10px;background:#c2c2c2;border-left:1px solid #5c5c5c"></div>
<div style="left:788px;top:306px;width:25px;height:10px;background:#c2c2c2;border-left:1px solid #5c5c5c"></div>
<div style="left:813px;top:306px;width:25px;height:10px;background:#c2c2c2;border-left:1px solid #5c5c5c"></div>
<div style="left:838px;top:306px;width:25px;height:10px;background:#009a3e;border-left:1px solid #5c5c5c"></div>
<div style="left:863px;top:306px;width:24px;height:10px;background:#c2c2c2;border-left:1px solid #5c5c5c"></div>
<div style="left:887px;top:306px;width:25px;height:10px;background:#c2c2c2;border-left:1px solid #5c5c5c"></div>
<div style="left:912px;top:306px;width:25px;height:10px;background:#c2c2c2;border-left:1px solid #5c5c5c"></div>
<div style="left:937px;top:306px;width:25px;height:10px;background:#c2c2c2;border-left:1px solid #5c5c5c"></div>
<div style="left:962px;top:306px;width:25px;height:10px;background:#c2c2c2;border-left:1px solid #5c5c5c"></div>
<div style="left:391px;top:316px;width:25px;height:9px;background:#c2c2c2;border-left:1px solid #5c5c5c"></div>
<div style="left:416px;top:316px;width:25px;height:9px;background:#c2c2c2;border-left:1px solid #5c5c5c"></div>
<div style="left:441px;top:316px;width:24px;height:9px;background:#c2c2c2;border-left:1px solid #5c5c5c"></div>
<div style="left:465px;top:316px;width:25px;height:9px;background:#c2c2c2;border-left:1px solid #5c5c5c"></div>
<div style="left:490px;top:316px;width:25px;height:9px;background:#c2c2c2;border-left:1px solid #5c5c5c"></div>
<div style="left:515px;top:316px;width:25px;height:9px;background:#c2c2c2;border-left:1px solid #5c5c5c"></div>
<div style="left:540px;top:316px;width:25px;height:9px;background:#c2c2c2;border-left:1px solid #5c5c5c"></div>
<div style="left:565px;top:316px;width:25px;height:9px;background:#c2c2c2;border-left:1px solid #5c5c5c"></div>
<div style="left:590px;top:316px;width:24px;height:9px;background:#c2c2c2;border-left:1px solid #5c5c5c"></div>
<div style="left:614px;top:316px;width:25px;height:9px;background:#c2c2c2;border-left:1px solid #5c5c5c"></div>
<div style="left:639px;top:316px;width:25px;height:9px;background:#c2c2c2;border-left:1px solid #5c5c5c"></div>
<div style="left:664px;top:316px;width:25px;height:9px;background:#c2c2c2;border-left:1px solid #5c5c5c"></div>
<div style="left:689px;top:316px;width:24px;height:9px;background:#c2c2c2;border-left:1px solid #5c5c5c"></div>
<div style="left:713px;top:316px;width:26px;height:9px;background:#c2c2c2;border-left:1px solid #5c5c5c"></div>
<div style="left:739px;top:316px;width:24px;height:9px;background:#c2c2c2;border-left:1px solid #5c5c5c"></div>
<div style="left:763px;top:316px;width:25px;height:9px;background:#c2c2c2;border-left:1px solid #5c5c5c"></div>
<div style="left:391px;top:325px;width:25px;height:9px;background:#c2c2c2;border-left:1px solid #5c5c5c"></div>
<div style="left:416px;top:325px;width:25px;height:9px;background:#c2c2c2;border-left:1px solid #5c5c5c"></div>
<div style="left:441px;top:325px;width:24px;height:9px;background:#c2c2c2;border-left:1px solid #5c5c5c"></div>
<div style="left:465px;top:325px;width:25px;height:9px;background:#c2c2c2;border-left:1px solid #5c5c5c"></div>
<div style="left:490px;top:325px;width:25px;height:9px;background:#c2c2c2;border-left:1px solid #5c5c5c"></div>
<div style="left:515px;top:325px;width:25px;height:9px;background:#c2c2c2;border-left:1px solid #5c5c5c"></div>
<div style="left:540px;top:325px;width:25px;height:9px;background:#c2c2c2;border-left:1px solid #5c5c5c"></div>
<div style="left:565px;top:325px;width:25px;height:9px;background:#c2c2c2;border-left:1px solid #5c5c5c"></div>
<div style="left:590px;top:325px;width:24px;height:9px;background:#009a3e;border-left:1px solid #5c5c5c"></div>
<div style="left:614px;top:325px;width:25px;height:9px;background:#c2c2c2;border-left:1px solid #5c5c5c"></div>
<div style="left:639px;top:325px;width:25px;height:9px;background:#c2c2c2;border-left:1px solid #5c5c5c"></div>
<div style="left:664px;top:325px;width:25px;height:9px;background:#c2c2c2;border-left:1px solid #5c5c5c"></div>
<div style="left:689px;top:325px;width:24px;height:9px;background:#c2c2c2;border-left:1px solid #5c5c5c"></div>
<div style="left:713px;top:325px;width:26px;height:9px;background:#c2c2c2;border-left:1px solid #5c5c5c"></div>
<div style="left:739px;top:325px;width:24px;height:9px;background:#c2c2c2;border-left:1px solid #5c5c5c"></div>
<div style="left:763px;top:325px;width:25px;height:9px;background:#c2c2c2;border-left:1px solid #5c5c5c"></div>
<div style="left:788px;top:325px;width:25px;height:9px;background:#c2c2c2;border-left:1px solid #5c5c5c"></div>
<div style="left:813px;top:325px;width:25px;height:9px;background:#c2c2c2;border-left:1px solid #5c5c5c"></div>
<div style="left:838px;top:325px;width:25px;height:9px;background:#c2c2c2;border-left:1px solid #5c5c5c"></div>
<div style="left:863px;top:325px;width:24px;height:9px;background:#c2c2c2;border-left:1px solid #5c5c5c"></div>
<div style="left:391px;top:334px;width:25px;height:9px;background:#c2c2c2;border-left:1px solid #5c5c5c"></div>
<div style="left:416px;top:334px;width:25px;height:9px;background:#c2c2c2;border-left:1px solid #5c5c5c"></div>
<div style="left:441px;top:334px;width:24px;height:9px;background:#c2c2c2;border-left:1px solid #5c5c5c"></div>
<div style="left:465px;top:334px;width:25px;height:9px;background:#c2c2c2;border-left:1px solid #5c5c5c"></div>
<div style="left:490px;top:334px;width:25px;height:9px;background:#c2c2c2;border-left:1px solid #5c5c5c"></div>
<div style="left:515px;top:334px;width:25px;height:9px;background:#c2c2c2;border-left:1px solid #5c5c5c"></div>
<div style="left:540px;top:334px;width:25px;height:9px;background:#c2c2c2;border-left:1px solid #5c5c5c"></div>
<div style="left:565px;top:334px;width:25px;height:9px;background:#c2c2c2;border-left:1px solid #5c5c5c"></div>
<div style="left:590px;top:334px;width:24px;height:9px;background:#c2c2c2;border-left:1px solid #5c5c5c"></div>
<div style="left:614px;top:334px;width:25px;height:9px;background:#c2c2c2;border-left:1px solid #5c5c5c"></div>
<div style="left:639px;top:334px;width:25px;height:9px;background:#c2c2c2;border-left:1px solid #5c5c5c"></div>
<div style="left:664px;top:334px;width:25px;height:9px;background:#009a3e;border-left:1px solid #5c5c5c"></div>
<div style="left:689px;top:334px;width:24px;height:9px;background:#c2c2c2;border-left:1px solid #5c5c5c"></div>
<div style="left:713px;top:334px;width:26px;height:9px;background:#c2c2c2;border-left:1px solid #5c5c5c"></div>
<div style="left:739px;top:334px;width:24px;height:9px;background:#c2c2c2;border-left:1px solid #5c5c5c"></div>
<div style="left:763px;top:334px;width:25px;height:9px;background:#c2c2c2;border-left:1px solid #5c5c5c"></div>
<div style="left:788px;top:334px;width:25px;height:9px;background:#c2c2c2;border-left:1px solid #5c5c5c"></div>
<div style="left:813px;top:334px;width:25px;height:9px;background:#c2c2c2;border-left:1px solid #5c5c5c"></div>
<div style="left:838px;top:334px;width:25px;height:9px;background:#009a3e;border-left:1px solid #5c5c5c"></div>
<div style="left:863px;top:334px;width:24px;height:9px;background:#c2c2c2;border-left:1px solid #5c5c5c"></div>
<div style="left:887px;top:334px;width:25px;height:9px;background:#c2c2c2;border-left:1px solid #5c5c5c"></div>
<div style="left:912px;top:334px;width:25px;height:9px;background:#c2c2c2;border-left:1px solid #5c5c5c"></div>
<div style="left:937px;top:334px;width:25px;height:9px;background:#c2c2c2;border-left:1px solid #5c5c5c"></div>
<div style="left:962px;top:334px;width:25px;height:9px;background:#c2c2c2;border-left:1px solid #5c5c5c"></div>
<div style="left:391px;top:352px;width:25px;height:9px;background:#c2c2c2;border-left:1px solid #5c5c5c"></div>
<div style="left:416px;top:352px;width:25px;height:9px;background:#c2c2c2;border-left:1px solid #5c5c5c"></div>
<div style="left:441px;top:352px;width:24px;height:9px;background:#c2c2c2;border-left:1px solid #5c5c5c"></div>
<div style="left:465px;top:352px;width:25px;height:9px;background:#c2c2c2;border-left:1px solid #5c5c5c"></div>
<div style="left:490px;top:352px;width:25px;height:9px;background:#c2c2c2;border-left:1px solid #5c5c5c"></div>
<div style="left:515px;top:352px;width:25px;height:9px;background:#c2c2c2;border-left:1px solid #5c5c5c"></div>
<div style="left:540px;top:352px;width:25px;height:9px;background:#c2c2c2;border-left:1px solid #5c5c5c"></div>
<div style="left:565px;top:352px;width:25px;height:9px;background:#c2c2c2;border-left:1px solid #5c5c5c"></div>
<div style="left:590px;top:352px;width:24px;height:9px;background:#c2c2c2;border-left:1px solid #5c5c5c"></div>
<div style="left:614px;top:352px;width:25px;height:9px;background:#c2c2c2;border-left:1px solid #5c5c5c"></div>
<div style="left:639px;top:352px;width:25px;height:9px;background:#c2c2c2;border-left:1px solid #5c5c5c"></div>
<div style="left:664px;top:352px;width:25px;height:9px;background:#009a3e;border-left:1px solid #5c5c5c"></div>
<div style="left:689px;top:352px;width:24px;height:9px;background:#c2c2c2;border-left:1px solid #5c5c5c"></div>
<div style="left:713px;top:352px;width:26px;height:9px;background:#c2c2c2;border-left:1px solid #5c5c5c"></div>
<div style="left:739px;top:352px;width:24px;height:9px;background:#c2c2c2;border-left:1px solid #5c5c5c"></div>
<div style="left:763px;top:352px;width:25px;height:9px;background:#c2c2c2;border-left:1px solid #5c5c5c"></div>
<div style="left:788px;top:352px;width:25px;height:9px;background:#c2c2c2;border-left:1px solid #5c5c5c"></div>
<div style="left:813px;top:352px;width:25px;height:9px;background:#c2c2c2;border-left:1px solid #5c5c5c"></div>
<div style="left:838px;top:352px;width:25px;height:9px;background:#009a3e;border-left:1px solid #5c5c5c"></div>
<div style="left:863px;top:352px;width:24px;height:9px;background:#c2c2c2;border-left:1px solid #5c5c5c"></div>
<div style="left:887px;top:352px;width:25px;height:9px;background:#c2c2c2;border-left:1px solid #5c5c5c"></div>
<div style="left:912px;top:352px;width:25px;height:9px;background:#c2c2c2;border-left:1px solid #5c5c5c"></div>
<div style="left:937px;top:352px;width:25px;height:9px;background:#c2c2c2;border-left:1px solid #5c5c5c"></div>
<div style="left:962px;top:352px;width:25px;height:9px;background:#c2c2c2;border-left:1px solid #5c5c5c"></div>
<div style="left:391px;top:361px;width:25px;height:10px;background:#c2c2c2;border-left:1px solid #5c5c5c"></div>
<div style="left:416px;top:361px;width:25px;height:10px;background:#c2c2c2;border-left:1px solid #5c5c5c"></div>
<div style="left:441px;top:361px;width:24px;height:10px;background:#c2c2c2;border-left:1px solid #5c5c5c"></div>
<div style="left:465px;top:361px;width:25px;height:10px;background:#c2c2c2;border-left:1px solid #5c5c5c"></div>
<div style="left:490px;top:361px;width:25px;height:10px;background:#c2c2c2;border-left:1px solid #5c5c5c"></div>
<div style="left:515px;top:361px;width:25px;height:10px;background:#c2c2c2;border-left:1px solid #5c5c5c"></div>
<div style="left:540px;top:361px;width:25px;height:10px;background:#c2c2c2;border-left:1px solid #5c5c5c"></div>
<div style="left:565px;top:361px;width:25px;height:10px;background:#c2c2c2;border-left:1px solid #5c5c5c"></div>
<div style="left:590px;top:361px;width:24px;height:10px;background:#c2c2c2;border-left:1px solid #5c5c5c"></div>
<div style="left:614px;top:361px;width:25px;height:10px;background:#c2c2c2;border-left:1px solid #5c5c5c"></div>
<div style="left:639px;top:361px;width:25px;height:10px;background:#c2c2c2;border-left:1px solid #5c5c5c"></div>
<div style="left:664px;top:361px;width:25px;height:10px;background:#c2c2c2;border-left:1px solid #5c5c5c"></div>
<div style="left:689px;top:361px;width:24px;height:10px;background:#c2c2c2;border-left:1px solid #5c5c5c"></div>
<div style="left:713px;top:361px;width:26px;height:10px;background:#c2c2c2;border-left:1px solid #5c5c5c"></div>
<div style="left:739px;top:361px;width:24px;height:10px;background:#c2c2c2;border-left:1px solid #5c5c5c"></div>
<div style="left:763px;top:361px;width:25px;height:10px;background:#c2c2c2;border-left:1px solid #5c5c5c"></div>
<div style="left:788px;top:361px;width:25px;height:10px;background:#c2c2c2;border-left:1px solid #5c5c5c"></div>
<div style="left:813px;top:361px;width:25px;height:10px;background:#c2c2c2;border-left:1px solid #5c5c5c"></div>
<div style="left:838px;top:361px;width:25px;height:10px;background:#c2c2c2;border-left:1px solid #5c5c5c"></div>
<div style="left:863px;top:361px;width:24px;height:10px;background:#c2c2c2;border-left:1px solid #5c5c5c"></div>
<div style="left:887px;top:361px;width:25px;height:10px;background:#c2c2c2;border-left:1px solid #5c5c5c"></div>
<div style="left:912px;top:361px;width:25px;height:10px;background:#c2c2c2;border-left:1px solid #5c5c5c"></div>
<div style="left:937px;top:361px;width:25px;height:10px;background:#c2c2c2;border-left:1px solid #5c5c5c"></div>
<div style="left:962px;top:361px;width:25px;height:10px;background:#c2c2c2;border-left:1px solid #5c5c5c"></div>
<div style="left:391px;top:371px;width:25px;height:9px;background:#c2c2c2;border-left:1px solid #5c5c5c"></div>
<div style="left:416px;top:371px;width:25px;height:9px;background:#c2c2c2;border-left:1px solid #5c5c5c"></div>
<div style="left:441px;top:371px;width:24px;height:9px;background:#c2c2c2;border-left:1px solid #5c5c5c"></div>
<div style="left:465px;top:371px;width:25px;height:9px;background:#c2c2c2;border-left:1px solid #5c5c5c"></div>
<div style="left:490px;top:371px;width:25px;height:9px;background:#c2c2c2;border-left:1px solid #5c5c5c"></div>
<div style="left:515px;top:371px;width:25px;height:9px;background:#c2c2c2;border-left:1px solid #5c5c5c"></div>
<div style="left:540px;top:371px;width:25px;height:9px;background:#c2c2c2;border-left:1px solid #5c5c5c"></div>
<div style="left:565px;top:371px;width:25px;height:9px;background:#c2c2c2;border-left:1px solid #5c5c5c"></div>
<div style="left:590px;top:371px;width:24px;height:9px;background:#c2c2c2;border-left:1px solid #5c5c5c"></div>
<div style="left:614px;top:371px;width:25px;height:9px;background:#c2c2c2;border-left:1px solid #5c5c5c"></div>
<div style="left:639px;top:371px;width:25px;height:9px;background:#c2c2c2;border-left:1px solid #5c5c5c"></div>
<div style="left:664px;top:371px;width:25px;height:9px;background:#009a3e;border-left:1px solid #5c5c5c"></div>
<div style="left:689px;top:371px;width:24px;height:9px;background:#c2c2c2;border-left:1px solid #5c5c5c"></div>
<div style="left:713px;top:371px;width:26px;height:9px;background:#c2c2c2;border-left:1px solid #5c5c5c"></div>
<div style="left:739px;top:371px;width:24px;height:9px;background:#c2c2c2;border-left:1px solid #5c5c5c"></div>
<div style="left:763px;top:371px;width:25px;height:9px;background:#c2c2c2;border-left:1px solid #5c5c5c"></div>
<div style="left:788px;top:371px;width:25px;height:9px;background:#c2c2c2;border-left:1px solid #5c5c5c"></div>
<div style="left:813px;top:371px;width:25px;height:9px;background:#c2c2c2;border-left:1px solid #5c5c5c"></div>
<div style="left:838px;top:371px;width:25px;height:9px;background:#009a3e;border-left:1px solid #5c5c5c"></div>
<div style="left:863px;top:371px;width:24px;height:9px;background:#c2c2c2;border-left:1px solid #5c5c5c"></div>
<div style="left:887px;top:371px;width:25px;height:9px;background:#c2c2c2;border-left:1px solid #5c5c5c"></div>
<div style="left:912px;top:371px;width:25px;height:9px;background:#c2c2c2;border-left:1px solid #5c5c5c"></div>
<div style="left:937px;top:371px;width:25px;height:9px;background:#c2c2c2;border-left:1px solid #5c5c5c"></div>
<div style="left:391px;top:389px;width:25px;height:9px;background:#c2c2c2;border-left:1px solid #5c5c5c"></div>
<div style="left:416px;top:389px;width:25px;height:9px;background:#c2c2c2;border-left:1px solid #5c5c5c"></div>
<div style="left:441px;top:389px;width:24px;height:9px;background:#c2c2c2;border-left:1px solid #5c5c5c"></div>
<div style="left:465px;top:389px;width:25px;height:9px;background:#c2c2c2;border-left:1px solid #5c5c5c"></div>
<div style="left:490px;top:389px;width:25px;height:9px;background:#c2c2c2;border-left:1px solid #5c5c5c"></div>
<div style="left:515px;top:389px;width:25px;height:9px;background:#c2c2c2;border-left:1px solid #5c5c5c"></div>
<div style="left:540px;top:389px;width:25px;height:9px;background:#c2c2c2;border-left:1px solid #5c5c5c"></div>
<div style="left:565px;top:389px;width:25px;height:9px;background:#c2c2c2;border-left:1px solid #5c5c5c"></div>
<div style="left:590px;top:389px;width:24px;height:9px;background:#c2c2c2;border-left:1px solid #5c5c5c"></div>
<div style="left:614px;top:389px;width:25px;height:9px;background:#c2c2c2;border-left:1px solid #5c5c5c"></div>
<div style="left:639px;top:389px;width:25px;height:9px;background:#c2c2c2;border-left:1px solid #5c5c5c"></div>
<div style="left:664px;top:389px;width:25px;height:9px;background:#009a3e;border-left:1px solid #5c5c5c"></div>
<div style="left:391px;top:398px;width:25px;height:9px;background:#c2c2c2;border-left:1px solid #5c5c5c"></div>
<div style="left:416px;top:398px;width:25px;height:9px;background:#c2c2c2;border-left:1px solid #5c5c5c"></div>
<div style="left:441px;top:398px;width:24px;height:9px;background:#c2c2c2;border-left:1px solid #5c5c5c"></div>
<div style="left:465px;top:398px;width:25px;height:9px;background:#c2c2c2;border-left:1px solid #5c5c5c"></div>
<div style="left:490px;top:398px;width:25px;height:9px;background:#c2c2c2;border-left:1px solid #5c5c5c"></div>
<div style="left:515px;top:398px;width:25px;height:9px;background:#c2c2c2;border-left:1px solid #5c5c5c"></div>
<div style="left:540px;top:398px;width:25px;height:9px;background:#c2c2c2;border-left:1px solid #5c5c5c"></div>
<div style="left:565px;top:398px;width:25px;height:9px;background:#c2c2c2;border-left:1px solid #5c5c5c"></div>
<div style="left:590px;top:398px;width:24px;height:9px;background:#c2c2c2;border-left:1px solid #5c5c5c"></div>
<div style="left:614px;top:398px;width:25px;height:9px;background:#c2c2c2;border-left:1px solid #5c5c5c"></div>
<div style="left:639px;top:398px;width:25px;height:9px;background:#c2c2c2;border-left:1px solid #5c5c5c"></div>
<div style="left:664px;top:398px;width:25px;height:9px;background:#009a3e;border-left:1px solid #5c5c5c"></div>
<div style="left:689px;top:398px;width:24px;height:9px;background:#c2c2c2;border-left:1px solid #5c5c5c"></div>
<div style="left:713px;top:398px;width:26px;height:9px;background:#c2c2c2;border-left:1px solid #5c5c5c"></div>
<div style="left:739px;top:398px;width:24px;height:9px;background:#c2c2c2;border-left:1px solid #5c5c5c"></div>
<div style="left:763px;top:398px;width:25px;height:9px;background:#c2c2c2;border-left:1px solid #5c5c5c"></div>
<div style="left:788px;top:398px;width:25px;height:9px;background:#c2c2c2;border-left:1px solid #5c5c5c"></div>
<div style="left:813px;top:398px;width:25px;height:9px;background:#c2c2c2;border-left:1px solid #5c5c5c"></div>
<div style="left:838px;top:398px;width:25px;height:9px;background:#009a3e;border-left:1px solid #5c5c5c"></div>
<div style="left:863px;top:398px;width:24px;height:9px;background:#c2c2c2;border-left:1px solid #5c5c5c"></div>
<div style="left:887px;top:398px;width:25px;height:9px;background:#c2c2c2;border-left:1px solid #5c5c5c"></div>
<div style="left:912px;top:398px;width:25px;height:9px;background:#c2c2c2;border-left:1px solid #5c5c5c"></div>
<div style="left:937px;top:398px;width:25px;height:9px;background:#c2c2c2;border-left:1px solid #5c5c5c"></div>
<div style="left:962px;top:398px;width:25px;height:9px;background:#c2c2c2;border-left:1px solid #5c5c5c"></div>
<div style="left:391px;top:407px;width:25px;height:10px;background:#c2c2c2;border-left:1px solid #5c5c5c"></div>
<div style="left:416px;top:407px;width:25px;height:10px;background:#c2c2c2;border-left:1px solid #5c5c5c"></div>
<div style="left:441px;top:407px;width:24px;height:10px;background:#c2c2c2;border-left:1px solid #5c5c5c"></div>
<div style="left:465px;top:407px;width:25px;height:10px;background:#c2c2c2;border-left:1px solid #5c5c5c"></div>
<div style="left:490px;top:407px;width:25px;height:10px;background:#c2c2c2;border-left:1px solid #5c5c5c"></div>
<div style="left:515px;top:407px;width:25px;height:10px;background:#c2c2c2;border-left:1px solid #5c5c5c"></div>
<div style="left:540px;top:407px;width:25px;height:10px;background:#c2c2c2;border-left:1px solid #5c5c5c"></div>
<div style="left:565px;top:407px;width:25px;height:10px;background:#c2c2c2;border-left:1px solid #5c5c5c"></div>
<div style="left:590px;top:407px;width:24px;height:10px;background:#c2c2c2;border-left:1px solid #5c5c5c"></div>
<div style="left:614px;top:407px;width:25px;height:10px;background:#c2c2c2;border-left:1px solid #5c5c5c"></div>
<div style="left:639px;top:407px;width:25px;height:10px;background:#c2c2c2;border-left:1px solid #5c5c5c"></div>
<div style="left:664px;top:407px;width:25px;height:10px;background:#c2c2c2;border-left:1px solid #5c5c5c"></div>
<div style="left:689px;top:407px;width:24px;height:10px;background:#c2c2c2;border-left:1px solid #5c5c5c"></div>
<div style="left:713px;top:407px;width:26px;height:10px;background:#c2c2c2;border-left:1px solid #5c5c5c"></div>
<div style="left:739px;top:407px;width:24px;height:10px;background:#c2c2c2;border-left:1px solid #5c5c5c"></div>
<div style="left:763px;top:407px;width:25px;height:10px;background:#c2c2c2;border-left:1px solid #5c5c5c"></div>
<div style="left:788px;top:407px;width:25px;height:10px;background:#c2c2c2;border-left:1px solid #5c5c5c"></div>
<div style="left:813px;top:407px;width:25px;height:10px;background:#c2c2c2;border-left:1px solid #5c5c5c"></div>
<div style="left:838px;top:407px;width:25px;height:10px;background:#c2c2c2;border-left:1px solid #5c5c5c"></div>
<div style="left:863px;top:407px;width:24px;height:10px;background:#c2c2c2;border-left:1px solid #5c5c5c"></div>
<div style="left:887px;top:407px;width:25px;height:10px;background:#c2c2c2;border-left:1px solid #5c5c5c"></div>
<div style="left:912px;top:407px;width:25px;height:10px;background:#c2c2c2;border-left:1px solid #5c5c5c"></div>
<div style="left:937px;top:407px;width:25px;height:10px;background:#c2c2c2;border-left:1px solid #5c5c5c"></div>
<div style="left:962px;top:407px;width:25px;height:10px;background:#c2c2c2;border-left:1px solid #5c5c5c"></div>
<div style="left:391px;top:417px;width:25px;height:9px;background:#c2c2c2;border-left:1px solid #5c5c5c"></div>
<div style="left:416px;top:417px;width:25px;height:9px;background:#c2c2c2;border-left:1px solid #5c5c5c"></div>
<div style="left:441px;top:417px;width:24px;height:9px;background:#c2c2c2;border-left:1px solid #5c5c5c"></div>
<div style="left:465px;top:417px;width:25px;height:9px;background:#c2c2c2;border-left:1px solid #5c5c5c"></div>
<div style="left:490px;top:417px;width:25px;height:9px;background:#c2c2c2;border-left:1px solid #5c5c5c"></div>
<div style="left:515px;top:417px;width:25px;height:9px;background:#c2c2c2;border-left:1px solid #5c5c5c"></div>
<div style="left:540px;top:417px;width:25px;height:9px;background:#c2c2c2;border-left:1px solid #5c5c5c"></div>
<div style="left:565px;top:417px;width:25px;height:9px;background:#c2c2c2;border-left:1px solid #5c5c5c"></div>
<div style="left:590px;top:417px;width:24px;height:9px;background:#c2c2c2;border-left:1px solid #5c5c5c"></div>
<div style="left:614px;top:417px;width:25px;height:9px;background:#c2c2c2;border-left:1px solid #5c5c5c"></div>
<div style="left:639px;top:417px;width:25px;height:9px;background:#c2c2c2;border-left:1px solid #5c5c5c"></div>
<div style="left:664px;top:417px;width:25px;height:9px;background:#c2c2c2;border-left:1px solid #5c5c5c"></div>
<div style="left:689px;top:417px;width:24px;height:9px;background:#c2c2c2;border-left:1px solid #5c5c5c"></div>
<div style="left:713px;top:417px;width:26px;height:9px;background:#c2c2c2;border-left:1px solid #5c5c5c"></div>
<div style="left:739px;top:417px;width:24px;height:9px;background:#c2c2c2;border-left:1px solid #5c5c5c"></div>
<div style="left:763px;top:417px;width:25px;height:9px;background:#c2c2c2;border-left:1px solid #5c5c5c"></div>
<div style="left:391px;top:426px;width:17px;height:9px;background:#c2c2c2;border-left:1px solid #5c5c5c"></div>
<div style="left:408px;top:426px;width:16px;height:9px;background:#c2c2c2;border-left:1px solid #5c5c5c"></div>
<div style="left:424px;top:426px;width:17px;height:9px;background:#c2c2c2;border-left:1px solid #5c5c5c"></div>
<div style="left:441px;top:426px;width:16px;height:9px;background:#c2c2c2;border-left:1px solid #5c5c5c"></div>
<div style="left:457px;top:426px;width:17px;height:9px;background:#c2c2c2;border-left:1px solid #5c5c5c"></div>
<div style="left:474px;top:426px;width:16px;height:9px;background:#c2c2c2;border-left:1px solid #5c5c5c"></div>
<div style="left:490px;top:426px;width:17px;height:9px;background:#c2c2c2;border-left:1px solid #5c5c5c"></div>
<div style="left:507px;top:426px;width:16px;height:9px;background:#c2c2c2;border-left:1px solid #5c5c5c"></div>
<div style="left:523px;top:426px;width:17px;height:9px;background:#c2c2c2;border-left:1px solid #5c5c5c"></div>
<div style="left:540px;top:426px;width:16px;height:9px;background:#c2c2c2;border-left:1px solid #5c5c5c"></div>
<div style="left:556px;top:426px;width:17px;height:9px;background:#c2c2c2;border-left:1px solid #5c5c5c"></div>
<div style="left:573px;top:426px;width:17px;height:9px;background:#c2c2c2;border-left:1px solid #5c5c5c"></div>
<div style="left:590px;top:426px;width:17px;height:9px;background:#c2c2c2;border-left:1px solid #5c5c5c"></div>
<div style="left:607px;top:426px;width:16px;height:9px;background:#c2c2c2;border-left:1px solid #5c5c5c"></div>
<div style="left:623px;top:426px;width:16px;height:9px;background:#c2c2c2;border-left:1px solid #5c5c5c"></div>
<div style="left:639px;top:426px;width:17px;height:9px;background:#c2c2c2;border-left:1px solid #5c5c5c"></div>
<div style="left:656px;top:426px;width:16px;height:9px;background:#c2c2c2;border-left:1px solid #5c5c5c"></div>
<div style="left:672px;top:426px;width:17px;height:9px;background:#c2c2c2;border-left:1px solid #5c5c5c"></div>
<div style="left:689px;top:426px;width:16px;height:9px;background:#c2c2c2;border-left:1px solid #5c5c5c"></div>
<div style="left:705px;top:426px;width:17px;height:9px;background:#c2c2c2;border-left:1px solid #5c5c5c"></div>
<div style="left:722px;top:426px;width:17px;height:9px;background:#c2c2c2;border-left:1px solid #5c5c5c"></div>
<div style="left:739px;top:426px;width:24px;height:9px;background:#c2c2c2;border-left:1px solid #5c5c5c"></div>
<div style="left:391px;top:435px;width:25px;height:9px;background:#c2c2c2;border-left:1px solid #5c5c5c"></div>
<div style="left:416px;top:435px;width:25px;height:9px;background:#c2c2c2;border-left:1px solid #5c5c5c"></div>
<div style="left:441px;top:435px;width:24px;height:9px;background:#c2c2c2;border-left:1px solid #5c5c5c"></div>
<div style="left:465px;top:435px;width:25px;height:9px;background:#c2c2c2;border-left:1px solid #5c5c5c"></div>
<div style="left:490px;top:435px;width:25px;height:9px;background:#c2c2c2;border-left:1px solid #5c5c5c"></div>
<div style="left:515px;top:435px;width:25px;height:9px;background:#c2c2c2;border-left:1px solid #5c5c5c"></div>
<div style="left:540px;top:435px;width:25px;height:9px;background:#c2c2c2;border-left:1px solid #5c5c5c"></div>
<div style="left:565px;top:435px;width:25px;height:9px;background:#c2c2c2;border-left:1px solid #5c5c5c"></div>
<div style="left:590px;top:435px;width:24px;height:9px;background:#c2c2c2;border-left:1px solid #5c5c5c"></div>
<div style="left:614px;top:435px;width:25px;height:9px;background:#c2c2c2;border-left:1px solid #5c5c5c"></div>
<div style="left:639px;top:435px;width:25px;height:9px;background:#c2c2c2;border-left:1px solid #5c5c5c"></div>
<div style="left:664px;top:435px;width:25px;height:9px;background:#009a3e;border-left:1px solid #5c5c5c"></div>
<div style="left:689px;top:435px;width:24px;height:9px;background:#c2c2c2;border-left:1px solid #5c5c5c"></div>
<div style="left:713px;top:435px;width:26px;height:9px;background:#c2c2c2;border-left:1px solid #5c5c5c"></div>
<div style="left:739px;top:435px;width:24px;height:9px;background:#c2c2c2;border-left:1px solid #5c5c5c"></div>
<div style="left:763px;top:435px;width:25px;height:9px;background:#c2c2c2;border-left:1px solid #5c5c5c"></div>
<div style="left:788px;top:435px;width:25px;height:9px;background:#c2c2c2;border-left:1px solid #5c5c5c"></div>
<div style="left:813px;top:435px;width:25px;height:9px;background:#c2c2c2;border-left:1px solid #5c5c5c"></div>
<div style="left:838px;top:435px;width:25px;height:9px;background:#009a3e;border-left:1px solid #5c5c5c"></div>
<div style="left:863px;top:435px;width:24px;height:9px;background:#c2c2c2;border-left:1px solid #5c5c5c"></div>
<div style="left:887px;top:435px;width:25px;height:9px;background:#c2c2c2;border-left:1px solid #5c5c5c"></div>
<div style="left:912px;top:435px;width:25px;height:9px;background:#c2c2c2;border-left:1px solid #5c5c5c"></div>
<div style="left:937px;top:435px;width:25px;height:9px;background:#c2c2c2;border-left:1px solid #5c5c5c"></div>
<div style="left:962px;top:435px;width:25px;height:9px;background:#c2c2c2;border-left:1px solid #5c5c5c"></div>
<div style="left:391px;top:453px;width:25px;height:9px;background:#c2c2c2;border-left:1px solid #5c5c5c"></div>
<div style="left:416px;top:453px;width:25px;height:9px;background:#c2c2c2;border-left:1px solid #5c5c5c"></div>
<div style="left:441px;top:453px;width:24px;height:9px;background:#c2c2c2;border-left:1px solid #5c5c5c"></div>
<div style="left:465px;top:453px;width:25px;height:9px;background:#c2c2c2;border-left:1px solid #5c5c5c"></div>
<div style="left:490px;top:453px;width:25px;height:9px;background:#c2c2c2;border-left:1px solid #5c5c5c"></div>
<div style="left:515px;top:453px;width:25px;height:9px;background:#c2c2c2;border-left:1px solid #5c5c5c"></div>
<div style="left:540px;top:453px;width:25px;height:9px;background:#c2c2c2;border-left:1px solid #5c5c5c"></div>
<div style="left:565px;top:453px;width:25px;height:9px;background:#c2c2c2;border-left:1px solid #5c5c5c"></div>
<div style="left:590px;top:453px;width:24px;height:9px;background:#c2c2c2;border-left:1px solid #5c5c5c"></div>
<div style="left:614px;top:453px;width:25px;height:9px;background:#c2c2c2;border-left:1px solid #5c5c5c"></div>
<div style="left:639px;top:453px;width:25px;height:9px;background:#c2c2c2;border-left:1px solid #5c5c5c"></div>
<div style="left:664px;top:453px;width:25px;height:9px;background:#009a3e;border-left:1px solid #5c5c5c"></div>
<div style="left:689px;top:453px;width:24px;height:9px;background:#c2c2c2;border-left:1px solid #5c5c5c"></div>
<div style="left:713px;top:453px;width:26px;height:9px;background:#c2c2c2;border-left:1px solid #5c5c5c"></div>
<div style="left:739px;top:453px;width:24px;height:9px;background:#c2c2c2;border-left:1px solid #5c5c5c"></div>
<div style="left:763px;top:453px;width:25px;height:9px;background:#c2c2c2;border-left:1px solid #5c5c5c"></div>
<div style="left:788px;top:453px;width:25px;height:9px;background:#c2c2c2;border-left:1px solid #5c5c5c"></div>
<div style="left:813px;top:453px;width:25px;height:9px;background:#c2c2c2;border-left:1px solid #5c5c5c"></div>
<div style="left:838px;top:453px;width:25px;height:9px;background:#009a3e;border-left:1px solid #5c5c5c"></div>
<div style="left:863px;top:453px;width:24px;height:9px;background:#c2c2c2;border-left:1px solid #5c5c5c"></div>
<div style="left:887px;top:453px;width:25px;height:9px;background:#c2c2c2;border-left:1px solid #5c5c5c"></div>
<div style="left:912px;top:453px;width:25px;height:9px;background:#c2c2c2;border-left:1px solid #5c5c5c"></div>
<div style="left:937px;top:453px;width:25px;height:9px;background:#c2c2c2;border-left:1px solid #5c5c5c"></div>
<div style="left:962px;top:453px;width:25px;height:9px;background:#c2c2c2;border-left:1px solid #5c5c5c"></div>
<div style="left:689px;top:462px;width:24px;height:10px;background:#c2c2c2;border-left:1px solid #5c5c5c"></div>
<div style="left:713px;top:462px;width:26px;height:10px;background:#c2c2c2;border-left:1px solid #5c5c5c"></div>
<div style="left:739px;top:462px;width:24px;height:10px;background:#c2c2c2;border-left:1px solid #5c5c5c"></div>
<div style="left:763px;top:462px;width:25px;height:10px;background:#c2c2c2;border-left:1px solid #5c5c5c"></div>
<div style="left:788px;top:462px;width:25px;height:10px;background:#c2c2c2;border-left:1px solid #5c5c5c"></div>
<div style="left:813px;top:462px;width:25px;height:10px;background:#c2c2c2;border-left:1px solid #5c5c5c"></div>
<div style="left:838px;top:462px;width:25px;height:10px;background:#009a3e;border-left:1px solid #5c5c5c"></div>
<div style="left:863px;top:462px;width:24px;height:10px;background:#c2c2c2;border-left:1px solid #5c5c5c"></div>
<div style="left:887px;top:462px;width:25px;height:10px;background:#c2c2c2;border-left:1px solid #5c5c5c"></div>
<div style="left:912px;top:462px;width:25px;height:10px;background:#c2c2c2;border-left:1px solid #5c5c5c"></div>
<div style="left:937px;top:462px;width:25px;height:10px;background:#c2c2c2;border-left:1px solid #5c5c5c"></div>
<div style="left:962px;top:462px;width:25px;height:10px;background:#c2c2c2;border-left:1px solid #5c5c5c"></div>
<div style="left:689px;top:472px;width:24px;height:9px;background:#009a3e;border-left:1px solid #5c5c5c"></div>
<div style="left:713px;top:472px;width:26px;height:9px;background:#c2c2c2;border-left:1px solid #5c5c5c"></div>
<div style="left:739px;top:472px;width:24px;height:9px;background:#c2c2c2;border-left:1px solid #5c5c5c"></div>
<div style="left:763px;top:472px;width:25px;height:9px;background:#c2c2c2;border-left:1px solid #5c5c5c"></div>
<div style="left:788px;top:472px;width:25px;height:9px;background:#c2c2c2;border-left:1px solid #5c5c5c"></div>
<div style="left:813px;top:472px;width:25px;height:9px;background:#c2c2c2;border-left:1px solid #5c5c5c"></div>
<div style="left:838px;top:472px;width:25px;height:9px;background:#009a3e;border-left:1px solid #5c5c5c"></div>
<div style="left:863px;top:472px;width:24px;height:9px;background:#c2c2c2;border-left:1px solid #5c5c5c"></div>
<div style="left:887px;top:472px;width:25px;height:9px;background:#c2c2c2;border-left:1px solid #5c5c5c"></div>
<div style="left:912px;top:472px;width:25px;height:9px;background:#c2c2c2;border-left:1px solid #5c5c5c"></div>
<div style="left:937px;top:472px;width:25px;height:9px;background:#c2c2c2;border-left:1px solid #5c5c5c"></div>
<div style="left:962px;top:472px;width:25px;height:9px;background:#c2c2c2;border-left:1px solid #5c5c5c"></div>
<div style="left:391px;top:481px;width:25px;height:9px;background:#c2c2c2;border-left:1px solid #5c5c5c"></div>
<div style="left:416px;top:481px;width:25px;height:9px;background:#c2c2c2;border-left:1px solid #5c5c5c"></div>
<div style="left:441px;top:481px;width:24px;height:9px;background:#c2c2c2;border-left:1px solid #5c5c5c"></div>
<div style="left:465px;top:481px;width:25px;height:9px;background:#c2c2c2;border-left:1px solid #5c5c5c"></div>
<div style="left:490px;top:481px;width:25px;height:9px;background:#c2c2c2;border-left:1px solid #5c5c5c"></div>
<div style="left:515px;top:481px;width:25px;height:9px;background:#c2c2c2;border-left:1px solid #5c5c5c"></div>
<div style="left:540px;top:481px;width:25px;height:9px;background:#c2c2c2;border-left:1px solid #5c5c5c"></div>
<div style="left:565px;top:481px;width:25px;height:9px;background:#c2c2c2;border-left:1px solid #5c5c5c"></div>
<div style="left:590px;top:481px;width:24px;height:9px;background:#c2c2c2;border-left:1px solid #5c5c5c"></div>
<div style="left:614px;top:481px;width:25px;height:9px;background:#c2c2c2;border-left:1px solid #5c5c5c"></div>
<div style="left:639px;top:481px;width:25px;height:9px;background:#c2c2c2;border-left:1px solid #5c5c5c"></div>
<div style="left:664px;top:481px;width:25px;height:9px;background:#c2c2c2;border-left:1px solid #5c5c5c"></div>
<div style="left:391px;top:490px;width:25px;height:9px;background:#c2c2c2;border-left:1px solid #5c5c5c"></div>
<div style="left:416px;top:490px;width:25px;height:9px;background:#c2c2c2;border-left:1px solid #5c5c5c"></div>
<div style="left:441px;top:490px;width:24px;height:9px;background:#c2c2c2;border-left:1px solid #5c5c5c"></div>
<div style="left:465px;top:490px;width:25px;height:9px;background:#c2c2c2;border-left:1px solid #5c5c5c"></div>
<div style="left:490px;top:490px;width:25px;height:9px;background:#c2c2c2;border-left:1px solid #5c5c5c"></div>
<div style="left:515px;top:490px;width:25px;height:9px;background:#c2c2c2;border-left:1px solid #5c5c5c"></div>
<div style="left:540px;top:490px;width:25px;height:9px;background:#c2c2c2;border-left:1px solid #5c5c5c"></div>
<div style="left:565px;top:490px;width:25px;height:9px;background:#c2c2c2;border-left:1px solid #5c5c5c"></div>
<div style="left:590px;top:490px;width:24px;height:9px;background:#c2c2c2;border-left:1px solid #5c5c5c"></div>
<div style="left:614px;top:490px;width:25px;height:9px;background:#c2c2c2;border-left:1px solid #5c5c5c"></div>
<div style="left:639px;top:490px;width:25px;height:9px;background:#c2c2c2;border-left:1px solid #5c5c5c"></div>
<div style="left:664px;top:490px;width:25px;height:9px;background:#009a3e;border-left:1px solid #5c5c5c"></div>
<div style="left:689px;top:490px;width:24px;height:9px;background:#c2c2c2;border-left:1px solid #5c5c5c"></div>
<div style="left:713px;top:490px;width:26px;height:9px;background:#c2c2c2;border-left:1px solid #5c5c5c"></div>
<div style="left:739px;top:490px;width:24px;height:9px;background:#c2c2c2;border-left:1px solid #5c5c5c"></div>
<div style="left:763px;top:490px;width:25px;height:9px;background:#c2c2c2;border-left:1px solid #5c5c5c"></div>
<div style="left:788px;top:490px;width:25px;height:9px;background:#c2c2c2;border-left:1px solid #5c5c5c"></div>
<div style="left:813px;top:490px;width:25px;height:9px;background:#c2c2c2;border-left:1px solid #5c5c5c"></div>
<div style="left:838px;top:490px;width:25px;height:9px;background:#009a3e;border-left:1px solid #5c5c5c"></div>
<div style="left:863px;top:490px;width:24px;height:9px;background:#c2c2c2;border-left:1px solid #5c5c5c"></div>
<div style="left:887px;top:490px;width:25px;height:9px;background:#c2c2c2;border-left:1px solid #5c5c5c"></div>
<div style="left:912px;top:490px;width:25px;height:9px;background:#c2c2c2;border-left:1px solid #5c5c5c"></div>
<div style="left:937px;top:490px;width:25px;height:9px;background:#c2c2c2;border-left:1px solid #5c5c5c"></div>
<div style="left:962px;top:490px;width:25px;height:9px;background:#c2c2c2;border-left:1px solid #5c5c5c"></div>
<div style="left:962px;top:499px;width:25px;height:9px;background:#c2c2c2;border-left:1px solid #5c5c5c"></div>
<div style="left:689px;top:508px;width:24px;height:10px;background:#c2c2c2;border-left:1px solid #5c5c5c"></div>
<div style="left:713px;top:508px;width:26px;height:10px;background:#c2c2c2;border-left:1px solid #5c5c5c"></div>
<div style="left:739px;top:508px;width:24px;height:10px;background:#c2c2c2;border-left:1px solid #5c5c5c"></div>
<div style="left:763px;top:508px;width:25px;height:10px;background:#c2c2c2;border-left:1px solid #5c5c5c"></div>
<div style="left:788px;top:508px;width:25px;height:10px;background:#c2c2c2;border-left:1px solid #5c5c5c"></div>
<div style="left:813px;top:508px;width:25px;height:10px;background:#c2c2c2;border-left:1px solid #5c5c5c"></div>
<div style="left:838px;top:508px;width:25px;height:10px;background:#c2c2c2;border-left:1px solid #5c5c5c"></div>
<div style="left:863px;top:508px;width:24px;height:10px;background:#c2c2c2;border-left:1px solid #5c5c5c"></div>
<div style="left:887px;top:508px;width:25px;height:10px;background:#c2c2c2;border-left:1px solid #5c5c5c"></div>
<div style="left:912px;top:508px;width:25px;height:10px;background:#c2c2c2;border-left:1px solid #5c5c5c"></div>
<div style="left:937px;top:508px;width:25px;height:10px;background:#c2c2c2;border-left:1px solid #5c5c5c"></div>
<div style="left:962px;top:508px;width:25px;height:10px;background:#c2c2c2;border-left:1px solid #5c5c5c"></div>
<div style="left:391px;top:518px;width:25px;height:9px;background:#c2c2c2;border-left:1px solid #5c5c5c"></div>
<div style="left:416px;top:518px;width:25px;height:9px;background:#c2c2c2;border-left:1px solid #5c5c5c"></div>
<div style="left:441px;top:518px;width:24px;height:9px;background:#c2c2c2;border-left:1px solid #5c5c5c"></div>
<div style="left:465px;top:518px;width:25px;height:9px;background:#c2c2c2;border-left:1px solid #5c5c5c"></div>
<div style="left:490px;top:518px;width:25px;height:9px;background:#c2c2c2;border-left:1px solid #5c5c5c"></div>
<div style="left:515px;top:518px;width:25px;height:9px;background:#c2c2c2;border-left:1px solid #5c5c5c"></div>
<div style="left:540px;top:518px;width:25px;height:9px;background:#c2c2c2;border-left:1px solid #5c5c5c"></div>
<div style="left:565px;top:518px;width:25px;height:9px;background:#c2c2c2;border-left:1px solid #5c5c5c"></div>
<div style="left:590px;top:518px;width:24px;height:9px;background:#c2c2c2;border-left:1px solid #5c5c5c"></div>
<div style="left:614px;top:518px;width:25px;height:9px;background:#c2c2c2;border-left:1px solid #5c5c5c"></div>
<div style="left:639px;top:518px;width:25px;height:9px;background:#c2c2c2;border-left:1px solid #5c5c5c"></div>
<div style="left:664px;top:518px;width:25px;height:9px;background:#c2c2c2;border-left:1px solid #5c5c5c"></div>
<div style="left:391px;top:527px;width:25px;height:9px;background:#c2c2c2;border-left:1px solid #5c5c5c"></div>
<div style="left:416px;top:527px;width:25px;height:9px;background:#c2c2c2;border-left:1px solid #5c5c5c"></div>
<div style="left:441px;top:527px;width:24px;height:9px;background:#c2c2c2;border-left:1px solid #5c5c5c"></div>
<div style="left:465px;top:527px;width:25px;height:9px;background:#c2c2c2;border-left:1px solid #5c5c5c"></div>
<div style="left:490px;top:527px;width:25px;height:9px;background:#c2c2c2;border-left:1px solid #5c5c5c"></div>
<div style="left:515px;top:527px;width:25px;height:9px;background:#c2c2c2;border-left:1px solid #5c5c5c"></div>
<div style="left:540px;top:527px;width:25px;height:9px;background:#c2c2c2;border-left:1px solid #5c5c5c"></div>
<div style="left:565px;top:527px;width:25px;height:9px;background:#c2c2c2;border-left:1px solid #5c5c5c"></div>
<div style="left:590px;top:527px;width:24px;height:9px;background:#c2c2c2;border-left:1px solid #5c5c5c"></div>
<div style="left:614px;top:527px;width:25px;height:9px;background:#c2c2c2;border-left:1px solid #5c5c5c"></div>
<div style="left:639px;top:527px;width:25px;height:9px;background:#c2c2c2;border-left:1px solid #5c5c5c"></div>
<div style="left:664px;top:527px;width:25px;height:9px;background:#009a3e;border-left:1px solid #5c5c5c"></div>
<div style="left:689px;top:527px;width:24px;height:9px;background:#c2c2c2;border-left:1px solid #5c5c5c"></div>
<div style="left:713px;top:527px;width:26px;height:9px;background:#c2c2c2;border-left:1px solid #5c5c5c"></div>
<div style="left:739px;top:527px;width:24px;height:9px;background:#c2c2c2;border-left:1px solid #5c5c5c"></div>
<div style="left:763px;top:527px;width:25px;height:9px;background:#c2c2c2;border-left:1px solid #5c5c5c"></div>
<div style="left:788px;top:527px;width:25px;height:9px;background:#c2c2c2;border-left:1px solid #5c5c5c"></div>
<div style="left:813px;top:527px;width:25px;height:9px;background:#c2c2c2;border-left:1px solid #5c5c5c"></div>
<div style="left:838px;top:527px;width:25px;height:9px;background:#009a3e;border-left:1px solid #5c5c5c"></div>
<div style="left:863px;top:527px;width:24px;height:9px;background:#c2c2c2;border-left:1px solid #5c5c5c"></div>
<div style="left:887px;top:527px;width:25px;height:9px;background:#c2c2c2;border-left:1px solid #5c5c5c"></div>
<div style="left:912px;top:527px;width:25px;height:9px;background:#c2c2c2;border-left:1px solid #5c5c5c"></div>
<div style="left:937px;top:527px;width:25px;height:9px;background:#c2c2c2;border-left:1px solid #5c5c5c"></div>
<div style="left:391px;top:545px;width:25px;height:9px;background:#c2c2c2;border-left:1px solid #5c5c5c"></div>
<div style="left:416px;top:545px;width:25px;height:9px;background:#c2c2c2;border-left:1px solid #5c5c5c"></div>
<div style="left:441px;top:545px;width:24px;height:9px;background:#c2c2c2;border-left:1px solid #5c5c5c"></div>
<div style="left:465px;top:545px;width:25px;height:9px;background:#c2c2c2;border-left:1px solid #5c5c5c"></div>
<div style="left:490px;top:545px;width:25px;height:9px;background:#c2c2c2;border-left:1px solid #5c5c5c"></div>
<div style="left:515px;top:545px;width:25px;height:9px;background:#c2c2c2;border-left:1px solid #5c5c5c"></div>
<div style="left:540px;top:545px;width:25px;height:9px;background:#c2c2c2;border-left:1px solid #5c5c5c"></div>
<div style="left:565px;top:545px;width:25px;height:9px;background:#c2c2c2;border-left:1px solid #5c5c5c"></div>
<div style="left:590px;top:545px;width:24px;height:9px;background:#c2c2c2;border-left:1px solid #5c5c5c"></div>
<div style="left:614px;top:545px;width:25px;height:9px;background:#c2c2c2;border-left:1px solid #5c5c5c"></div>
<div style="left:639px;top:545px;width:25px;height:9px;background:#c2c2c2;border-left:1px solid #5c5c5c"></div>
<div style="left:664px;top:545px;width:25px;height:9px;background:#009a3e;border-left:1px solid #5c5c5c"></div>
<div style="left:689px;top:545px;width:24px;height:9px;background:#c2c2c2;border-left:1px solid #5c5c5c"></div>
<div style="left:713px;top:545px;width:26px;height:9px;background:#c2c2c2;border-left:1px solid #5c5c5c"></div>
<div style="left:739px;top:545px;width:24px;height:9px;background:#c2c2c2;border-left:1px solid #5c5c5c"></div>
<div style="left:763px;top:545px;width:25px;height:9px;background:#c2c2c2;border-left:1px solid #5c5c5c"></div>
<div style="left:788px;top:545px;width:25px;height:9px;background:#c2c2c2;border-left:1px solid #5c5c5c"></div>
<div style="left:813px;top:545px;width:25px;height:9px;background:#c2c2c2;border-left:1px solid #5c5c5c"></div>
<div style="left:838px;top:545px;width:25px;height:9px;background:#009a3e;border-left:1px solid #5c5c5c"></div>
<div style="left:863px;top:545px;width:24px;height:9px;background:#c2c2c2;border-left:1px solid #5c5c5c"></div>
<div style="left:887px;top:545px;width:25px;height:9px;background:#c2c2c2;border-left:1px solid #5c5c5c"></div>
<div style="left:912px;top:545px;width:25px;height:9px;background:#c2c2c2;border-left:1px solid #5c5c5c"></div>
<div style="left:937px;top:545px;width:25px;height:9px;background:#c2c2c2;border-left:1px solid #5c5c5c"></div>
<div style="left:962px;top:545px;width:25px;height:9px;background:#c2c2c2;border-left:1px solid #5c5c5c"></div>
<div style="left:176px;top:150px;width:811px;height:1px;background:#6e6e6e"></div>
<div style="left:176px;top:159px;width:811px;height:1px;background:#6e6e6e"></div>
<div style="left:176px;top:169px;width:811px;height:1px;background:#6e6e6e"></div>
<div style="left:176px;top:178px;width:811px;height:1px;background:#6e6e6e"></div>
<div style="left:176px;top:187px;width:811px;height:1px;background:#6e6e6e"></div>
<div style="left:176px;top:196px;width:811px;height:1px;background:#6e6e6e"></div>
<div style="left:176px;top:205px;width:811px;height:1px;background:#6e6e6e"></div>
<div style="left:176px;top:215px;width:811px;height:1px;background:#6e6e6e"></div>
<div style="left:176px;top:224px;width:811px;height:1px;background:#6e6e6e"></div>
<div style="left:176px;top:233px;width:811px;height:1px;background:#6e6e6e"></div>
<div style="left:176px;top:242px;width:811px;height:1px;background:#6e6e6e"></div>
<div style="left:176px;top:251px;width:811px;height:1px;background:#6e6e6e"></div>
<div style="left:176px;top:260px;width:811px;height:1px;background:#6e6e6e"></div>
<div style="left:176px;top:270px;width:811px;height:1px;background:#6e6e6e"></div>
<div style="left:176px;top:279px;width:811px;height:1px;background:#6e6e6e"></div>
<div style="left:176px;top:288px;width:811px;height:1px;background:#6e6e6e"></div>
<div style="left:176px;top:297px;width:811px;height:1px;background:#6e6e6e"></div>
<div style="left:176px;top:306px;width:811px;height:1px;background:#6e6e6e"></div>
<div style="left:176px;top:316px;width:811px;height:1px;background:#6e6e6e"></div>
<div style="left:176px;top:325px;width:811px;height:1px;background:#6e6e6e"></div>
<div style="left:176px;top:334px;width:811px;height:1px;background:#6e6e6e"></div>
<div style="left:176px;top:343px;width:811px;height:1px;background:#6e6e6e"></div>
<div style="left:176px;top:352px;width:811px;height:1px;background:#6e6e6e"></div>
<div style="left:176px;top:361px;width:811px;height:1px;background:#6e6e6e"></div>
<div style="left:176px;top:371px;width:811px;height:1px;background:#6e6e6e"></div>
<div style="left:176px;top:380px;width:811px;height:1px;background:#6e6e6e"></div>
<div style="left:176px;top:389px;width:811px;height:1px;background:#6e6e6e"></div>
<div style="left:176px;top:398px;width:811px;height:1px;background:#6e6e6e"></div>
<div style="left:176px;top:407px;width:811px;height:1px;background:#6e6e6e"></div>
<div style="left:176px;top:417px;width:811px;height:1px;background:#6e6e6e"></div>
<div style="left:176px;top:426px;width:811px;height:1px;background:#6e6e6e"></div>
<div style="left:176px;top:435px;width:811px;height:1px;background:#6e6e6e"></div>
<div style="left:176px;top:444px;width:811px;height:1px;background:#6e6e6e"></div>
<div style="left:176px;top:453px;width:811px;height:1px;background:#6e6e6e"></div>
<div style="left:176px;top:462px;width:811px;height:1px;background:#6e6e6e"></div>
<div style="left:176px;top:472px;width:811px;height:1px;background:#6e6e6e"></div>
<div style="left:176px;top:481px;width:811px;height:1px;background:#6e6e6e"></div>
<div style="left:176px;top:490px;width:811px;height:1px;background:#6e6e6e"></div>
<div style="left:176px;top:499px;width:811px;height:1px;background:#6e6e6e"></div>
<div style="left:176px;top:508px;width:811px;height:1px;background:#6e6e6e"></div>
<div style="left:176px;top:518px;width:811px;height:1px;background:#6e6e6e"></div>
<div style="left:176px;top:527px;width:811px;height:1px;background:#6e6e6e"></div>
<div style="left:176px;top:536px;width:811px;height:1px;background:#6e6e6e"></div>
<div style="left:176px;top:545px;width:811px;height:1px;background:#6e6e6e"></div>
<div style="left:156px;top:150px;width:1px;height:74px;background:#c9c9c9"></div>
<div style="left:156px;top:224px;width:13px;height:1px;background:#c9c9c9"></div>
<div style="left:156px;top:233px;width:1px;height:46px;background:#c9c9c9"></div>
<div style="left:156px;top:279px;width:13px;height:1px;background:#c9c9c9"></div>
<div style="left:156px;top:288px;width:1px;height:55px;background:#c9c9c9"></div>
<div style="left:156px;top:343px;width:13px;height:1px;background:#c9c9c9"></div>
<div style="left:156px;top:352px;width:1px;height:28px;background:#c9c9c9"></div>
<div style="left:156px;top:380px;width:13px;height:1px;background:#c9c9c9"></div>
<div style="left:156px;top:389px;width:1px;height:55px;background:#c9c9c9"></div>
<div style="left:156px;top:444px;width:13px;height:1px;background:#c9c9c9"></div>
<div style="left:156px;top:453px;width:1px;height:83px;background:#c9c9c9"></div>
<div style="left:156px;top:536px;width:13px;height:1px;background:#c9c9c9"></div>
<div style="left:156px;top:545px;width:1px;height:3px;background:#c9c9c9"></div>
<div style="left:1014px;top:115px;width:8px;height:439px;background:#fff"></div>
<div style="left:1016px;top:127px;width:4px;height:407px;background:#dcdcdc;border-radius:2px"></div>
<div style="left:1016px;top:127px;width:4px;height:81px;background:#a9a9a9;border-radius:2px"></div>
<svg style="left:1016px;top:119px" width="4" height="3" viewBox="0 0 4 3"><path d="M0 2.5 H4 L2 0 Z" fill="#bbb"/></svg>
<svg style="left:1016px;top:539px" width="4" height="3" viewBox="0 0 4 3"><path d="M0 0 H4 L2 2.5 Z" fill="#666"/></svg>
<div style="left:152px;top:547px;width:862px;height:7px;background:#fff"></div>
<div style="left:164px;top:548px;width:838px;height:4px;background:#dcdcdc;border-radius:2px"></div>
<div style="left:164px;top:548px;width:773px;height:4px;background:#a9a9a9;border-radius:2px"></div>
<svg style="left:156px;top:548px" width="3" height="4" viewBox="0 0 3 4"><path d="M2.5 0 V4 L0 2 Z" fill="#ccc"/></svg>
<svg style="left:1006px;top:548px" width="3" height="4" viewBox="0 0 3 4"><path d="M0 0 V4 L2.5 2 Z" fill="#666"/></svg>
<div style="left:151px;top:554px;width:872px;height:1px;background:#c6c6c6"></div>
<div style="left:1022px;top:114px;width:1px;height:441px;background:#d0d0d0"></div>
<div style="left:464px;top:196px;width:28px;height:11px;border:2px solid #f3c74a"></div>
</body></html>
